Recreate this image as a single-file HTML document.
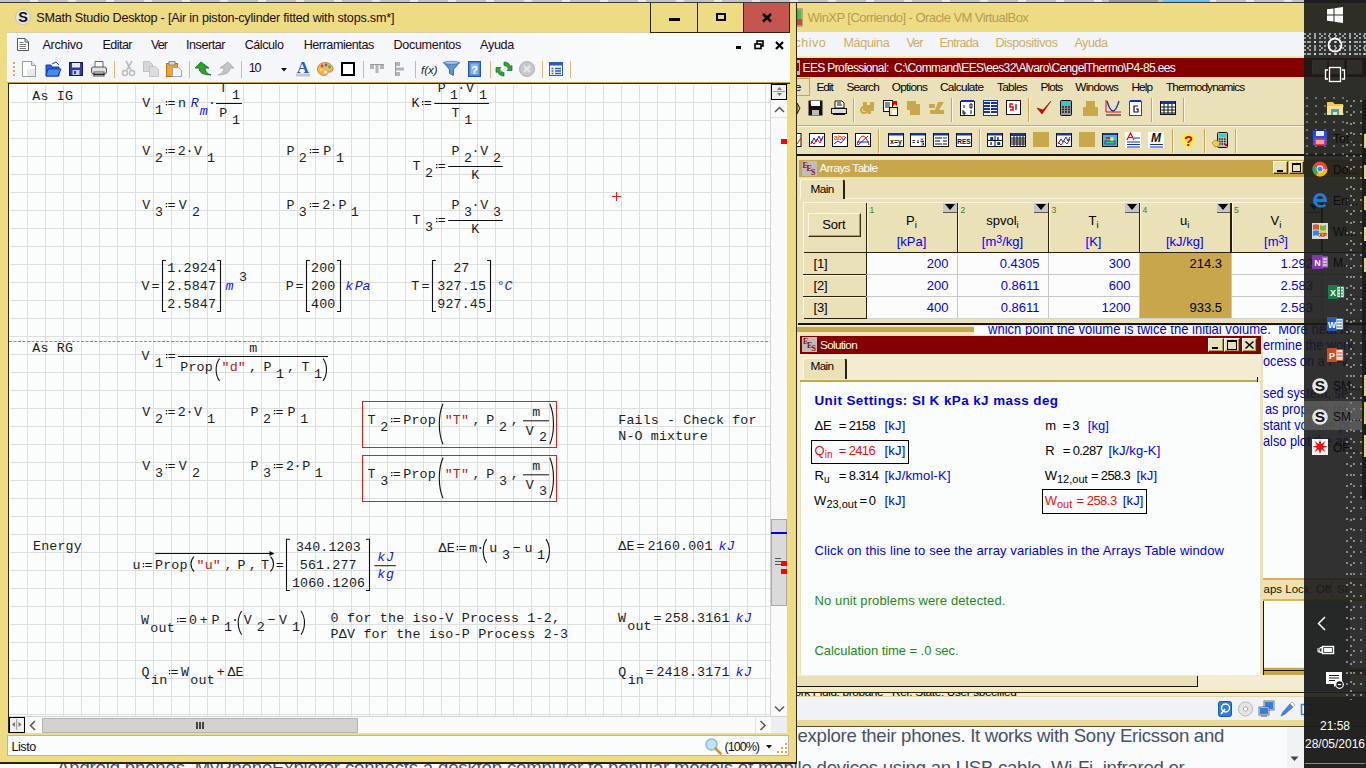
<!DOCTYPE html>
<html lang="es"><head><meta charset="utf-8"><title>SMath Studio Desktop</title>
<style>
html,body{margin:0;padding:0}
body{width:1366px;height:768px;overflow:hidden;position:relative;background:#fff;font-family:"Liberation Sans",sans-serif}
div,span.t{position:absolute;box-sizing:border-box}
span.t{white-space:pre}
svg{overflow:visible}
svg text{white-space:pre}
</style></head>
<body>
<div style="left:0px;top:0px;width:1366px;height:3px;background:#C4C4C4;"></div>
<div style="left:30px;top:0px;width:8px;height:2px;background:#E8E8E8;"></div>
<div style="left:68px;top:0px;width:8px;height:2px;background:#E8E8E8;"></div>
<div style="left:106px;top:0px;width:8px;height:2px;background:#E8E8E8;"></div>
<div style="left:144px;top:0px;width:8px;height:2px;background:#E8E8E8;"></div>
<div style="left:182px;top:0px;width:8px;height:2px;background:#E8E8E8;"></div>
<div style="left:220px;top:0px;width:8px;height:2px;background:#E8E8E8;"></div>
<div style="left:258px;top:0px;width:8px;height:2px;background:#E8E8E8;"></div>
<div style="left:296px;top:0px;width:8px;height:2px;background:#E8E8E8;"></div>
<div style="left:334px;top:0px;width:8px;height:2px;background:#E8E8E8;"></div>
<div style="left:372px;top:0px;width:8px;height:2px;background:#E8E8E8;"></div>
<div style="left:410px;top:0px;width:8px;height:2px;background:#E8E8E8;"></div>
<div style="left:448px;top:0px;width:8px;height:2px;background:#E8E8E8;"></div>
<div style="left:486px;top:0px;width:8px;height:2px;background:#E8E8E8;"></div>
<div style="left:524px;top:0px;width:8px;height:2px;background:#E8E8E8;"></div>
<div style="left:562px;top:0px;width:8px;height:2px;background:#E8E8E8;"></div>
<div style="left:600px;top:0px;width:8px;height:2px;background:#E8E8E8;"></div>
<div style="left:638px;top:0px;width:8px;height:2px;background:#E8E8E8;"></div>
<div style="left:676px;top:0px;width:8px;height:2px;background:#E8E8E8;"></div>
<div style="left:714px;top:0px;width:8px;height:2px;background:#E8E8E8;"></div>
<div style="left:752px;top:0px;width:8px;height:2px;background:#E8E8E8;"></div>
<div style="left:790px;top:0px;width:8px;height:2px;background:#E8E8E8;"></div>
<div style="left:828px;top:0px;width:8px;height:2px;background:#E8E8E8;"></div>
<div style="left:866px;top:0px;width:8px;height:2px;background:#E8E8E8;"></div>
<div style="left:904px;top:0px;width:8px;height:2px;background:#E8E8E8;"></div>
<div style="left:942px;top:0px;width:8px;height:2px;background:#E8E8E8;"></div>
<div style="left:980px;top:0px;width:8px;height:2px;background:#E8E8E8;"></div>
<div style="left:1018px;top:0px;width:8px;height:2px;background:#E8E8E8;"></div>
<div style="left:1056px;top:0px;width:8px;height:2px;background:#E8E8E8;"></div>
<div style="left:1094px;top:0px;width:8px;height:2px;background:#E8E8E8;"></div>
<div style="left:1132px;top:0px;width:8px;height:2px;background:#E8E8E8;"></div>
<div style="left:1170px;top:0px;width:8px;height:2px;background:#E8E8E8;"></div>
<div style="left:1208px;top:0px;width:8px;height:2px;background:#E8E8E8;"></div>
<div style="left:1246px;top:0px;width:8px;height:2px;background:#E8E8E8;"></div>
<div style="left:1284px;top:0px;width:8px;height:2px;background:#E8E8E8;"></div>
<div style="left:1322px;top:0px;width:8px;height:2px;background:#E8E8E8;"></div>
<div style="left:1109px;top:0px;width:49px;height:2px;background:#9A9A9A;"></div>
<div style="left:1163px;top:0px;width:47px;height:2px;background:#6EC2EE;"></div>
<div style="left:0px;top:2px;width:1366px;height:1px;background:#3A3A3A;"></div>
<div style="left:0px;top:727px;width:1366px;height:41px;background:#FAFBFD;"></div>
<span class="t" id="m1" style="top:727px;font:18.6px/18.6px 'Liberation Sans', sans-serif;color:#475166;letter-spacing:-0.279px;left:797.5px;">explore their phones. It works with Sony Ericsson and</span>
<span class="t" id="m2" style="top:759px;font:18.6px/18.6px 'Liberation Sans', sans-serif;color:#475166;letter-spacing:-0.177px;left:57px;">Android phones. MyPhoneExplorer connects a desktop computer to popular models of mobile </span>
<span class="t" id="m3" style="top:759px;font:18.6px/18.6px 'Liberation Sans', sans-serif;color:#475166;letter-spacing:-0.269px;left:816.6px;">devices using an USB cable, Wi-Fi, infrared or</span>
<div style="left:1287px;top:727px;width:17px;height:41px;background:#F1F2F4;"></div>
<svg style="position:absolute;left:1290px;top:756px" width="10" height="6"><path d="M0.5,0.5h8l-4,4.5z" fill="#444"/></svg>
<div style="left:797px;top:3px;width:569px;height:724px;background:#EEDC84;"></div>
<div style="left:797px;top:32px;width:569px;height:24px;background:#F3F4F8;"></div>
<div style="left:797px;top:56px;width:569px;height:2px;background:#F4E9B0;"></div>
<div style="left:797px;top:725px;width:569px;height:2px;background:#8A7A3A;"></div>
<div style="left:797px;top:719px;width:569px;height:7px;background:#E9DA98;"></div>
<div style="left:797px;top:726px;width:569px;height:1px;background:#5A5030;"></div>
<svg style="position:absolute;left:797px;top:9px" width="6" height="18"><rect x="0" y="1" width="4" height="9" fill="#5DB84A"/><rect x="0" y="10" width="5" height="6" fill="#C44A3A"/><rect x="0" y="0" width="5" height="17" fill="none" stroke="#777" stroke-width="1"/></svg>
<span class="t" id="m4" style="top:11px;font:13px/13px 'Liberation Sans', sans-serif;color:#B39C52;letter-spacing:-0.558px;left:807.6px;">WinXP [Corriendo] - Oracle VM VirtualBox</span>
<span class="t" id="m5" style="top:37px;font:12.5px/12.5px 'Liberation Sans', sans-serif;color:#C9AE5E;letter-spacing:0.502px;left:781px;">Archivo</span>
<span class="t" id="m6" style="top:37px;font:12.5px/12.5px 'Liberation Sans', sans-serif;color:#C9AE5E;letter-spacing:-0.265px;left:843.4px;">Máquina</span>
<span class="t" id="m7" style="top:37px;font:12.5px/12.5px 'Liberation Sans', sans-serif;color:#C9AE5E;letter-spacing:-0.922px;left:906.4px;">Ver</span>
<span class="t" id="m8" style="top:37px;font:12.5px/12.5px 'Liberation Sans', sans-serif;color:#C9AE5E;letter-spacing:-0.683px;left:939.4px;">Entrada</span>
<span class="t" id="m9" style="top:37px;font:12.5px/12.5px 'Liberation Sans', sans-serif;color:#C9AE5E;letter-spacing:-0.382px;left:995.4px;">Dispositivos</span>
<span class="t" id="m10" style="top:37px;font:12.5px/12.5px 'Liberation Sans', sans-serif;color:#C9AE5E;letter-spacing:-0.404px;left:1074.4px;">Ayuda</span>
<div style="left:797px;top:58px;width:569px;height:639px;background:#EBE1B8;"></div>
<div style="left:797px;top:58px;width:569px;height:19px;background:#840000;"></div>
<svg style="position:absolute;left:797px;top:60px" width="4" height="15"><rect width="3" height="15" fill="#B9B9B9"/><rect x="0" y="3" width="2" height="8" fill="#7A1010"/></svg>
<span class="t" id="m11" style="top:62px;font:12px/12px 'Liberation Sans', sans-serif;color:#fff;letter-spacing:-0.621px;left:802.5px;">EES Professional:  C:\Command\EES\ees32\Alvaro\CengelThermo\P4-85.ees</span>
<div style="left:1312px;top:60px;width:16px;height:15px;background:#EBE1B8;border:1px solid #fff;border-right-color:#404040;border-bottom-color:#404040;"></div>
<div style="left:1329px;top:60px;width:16px;height:15px;background:#EBE1B8;border:1px solid #fff;border-right-color:#404040;border-bottom-color:#404040;"></div>
<div style="left:1347px;top:60px;width:16px;height:15px;background:#EBE1B8;border:1px solid #fff;border-right-color:#404040;border-bottom-color:#404040;"></div>
<div style="left:797px;top:77px;width:569px;height:21px;background:#EBE1B8;"></div>
<div style="left:797px;top:78px;width:12.5px;height:18px;border:1px solid #C9A24A;border-left:0;"></div>
<span class="t" id="m12" style="top:82px;font:11.8px/11.8px 'Liberation Sans', sans-serif;color:#000;letter-spacing:0.746px;left:780px;">File</span>
<span class="t" id="m13" style="top:82px;font:11.8px/11.8px 'Liberation Sans', sans-serif;color:#000;letter-spacing:-0.982px;left:816.4px;">Edit</span>
<span class="t" id="m14" style="top:82px;font:11.8px/11.8px 'Liberation Sans', sans-serif;color:#000;letter-spacing:-0.798px;left:846.4px;">Search</span>
<span class="t" id="m15" style="top:82px;font:11.8px/11.8px 'Liberation Sans', sans-serif;color:#000;letter-spacing:-0.722px;left:891.7px;">Options</span>
<span class="t" id="m16" style="top:82px;font:11.8px/11.8px 'Liberation Sans', sans-serif;color:#000;letter-spacing:-0.654px;left:940px;">Calculate</span>
<span class="t" id="m17" style="top:82px;font:11.8px/11.8px 'Liberation Sans', sans-serif;color:#000;letter-spacing:-0.685px;left:997px;">Tables</span>
<span class="t" id="m18" style="top:82px;font:11.8px/11.8px 'Liberation Sans', sans-serif;color:#000;letter-spacing:-0.847px;left:1040.4px;">Plots</span>
<span class="t" id="m19" style="top:82px;font:11.8px/11.8px 'Liberation Sans', sans-serif;color:#000;letter-spacing:-0.680px;left:1075.2px;">Windows</span>
<span class="t" id="m20" style="top:82px;font:11.8px/11.8px 'Liberation Sans', sans-serif;color:#000;letter-spacing:-0.941px;left:1131.5px;">Help</span>
<span class="t" id="m21" style="top:82px;font:11.8px/11.8px 'Liberation Sans', sans-serif;color:#000;letter-spacing:-0.870px;left:1166px;">Thermodynamics</span>
<div style="left:797px;top:124.5px;width:507px;height:1px;background:#CDA654;"></div>
<div style="left:797px;top:125.5px;width:507px;height:1px;background:#FBF6DD;"></div>
<div style="left:797px;top:154px;width:569px;height:2px;background:#1A1505;"></div>
<div style="left:797px;top:156px;width:569px;height:3px;background:#F1E8C2;"></div>
<svg style="position:absolute;left:797px;top:100px" width="4" height="16" viewBox="0 0 4 16"><path d="M0,3l3,5l-3,6z" fill="#E6C23A" stroke="#222" stroke-width="1"/></svg>
<svg style="position:absolute;left:808px;top:100px" width="15" height="16" viewBox="0 0 15 16"><rect x="0.5" y="0.5" width="14" height="15" fill="#111"/><rect x="3" y="1" width="9" height="5" fill="#fff"/><rect x="4" y="10" width="7" height="5" fill="#bbb"/><rect x="2" y="1" width="1" height="3" fill="#d00"/></svg>
<svg style="position:absolute;left:831px;top:100px" width="16" height="16" viewBox="0 0 16 16"><path d="M4,1h7l2,2v5h-9z" fill="#fff" stroke="#111"/><rect x="0.5" y="8.5" width="15" height="5" fill="#ddd" stroke="#111"/><rect x="2" y="13" width="12" height="2" fill="#111"/><path d="M6,3h4M6,5h5" stroke="#111"/></svg>
<div style="left:853px;top:98px;width:1px;height:24px;background:#CDA654;"></div>
<div style="left:854px;top:98px;width:1px;height:24px;background:#FBF6DD;"></div>
<svg style="position:absolute;left:860px;top:100px" width="16" height="16" viewBox="0 0 16 16"><path d="M3,2h4v3h3v-3h4v9h-3v3h-3l-2,-3h-3z" fill="#C9A84C"/><circle cx="4" cy="10" r="3" fill="none" stroke="#C9A84C" stroke-width="2"/></svg>
<svg style="position:absolute;left:883px;top:100px" width="16" height="16" viewBox="0 0 16 16"><rect x="0.5" y="0.5" width="9" height="11" fill="#fff" stroke="#111"/><path d="M2,3h5M2,5h5M2,7h5" stroke="#111"/><rect x="6.5" y="7.5" width="8" height="8" fill="#F4E27A" stroke="#111"/><rect x="9" y="10" width="5" height="5" fill="#fff"/><path d="M9,1l5,0l0,5l-2,-2l-2,2z" fill="#e00"/></svg>
<svg style="position:absolute;left:906px;top:100px" width="16" height="16" viewBox="0 0 16 16"><path d="M1,1h9v3h4v11h-10v-5h-3z" fill="#C9A84C"/></svg>
<svg style="position:absolute;left:929px;top:100px" width="16" height="16" viewBox="0 0 16 16"><path d="M0,4h6v4h-6zM9,2h6l-5,8h5v4h-14v-4h5z" fill="#C9A84C"/></svg>
<div style="left:951px;top:98px;width:1px;height:24px;background:#CDA654;"></div>
<div style="left:952px;top:98px;width:1px;height:24px;background:#FBF6DD;"></div>
<svg style="position:absolute;left:960px;top:100px" width="15" height="16" viewBox="0 0 15 16"><rect x="0.5" y="1.5" width="14" height="14" fill="#fff" stroke="#111"/><rect x="1" y="0" width="13" height="2" fill="#1030C0"/><path d="M4,5v3M10,4v4h2v-4zM3,10v4h2v-2h-2M11,10v4" stroke="#111" fill="none"/></svg>
<svg style="position:absolute;left:983px;top:100px" width="15" height="16" viewBox="0 0 15 16"><rect x="0.5" y="0.5" width="14" height="15" fill="#fff" stroke="#1030C0"/><path d="M1,3h13M1,6h13M1,9h13M1,12h13" stroke="#1030C0" stroke-width="2"/><path d="M7.5,1v14" stroke="#fff"/></svg>
<svg style="position:absolute;left:1006px;top:100px" width="15" height="16" viewBox="0 0 15 16"><rect x="0.5" y="0.5" width="14" height="14" fill="#fff" stroke="#111"/><path d="M7,4h-3v3h3v3h-3M10,4v6" stroke="#e00" stroke-width="1.4" fill="none"/></svg>
<div style="left:1028px;top:98px;width:1px;height:24px;background:#CDA654;"></div>
<div style="left:1029px;top:98px;width:1px;height:24px;background:#FBF6DD;"></div>
<svg style="position:absolute;left:1036px;top:100px" width="16" height="16" viewBox="0 0 16 16"><path d="M1,8l5,6l9,-13l-8,9z" fill="#e00000" stroke="#900" stroke-width=".6"/></svg>
<svg style="position:absolute;left:1060px;top:100px" width="12" height="16" viewBox="0 0 12 16"><rect x="0.5" y="0.5" width="11" height="15" rx="1" fill="#999" stroke="#111"/><rect x="2" y="2" width="8" height="3" fill="#3cc"/><path d="M2,7h8M2,9.5h8M2,12h8" stroke="#222" stroke-width="1.4" stroke-dasharray="2 1"/></svg>
<svg style="position:absolute;left:1083px;top:100px" width="16" height="16" viewBox="0 0 16 16"><path d="M3,1h9v6h3v9h-15v-9h3z" fill="#C9A84C"/></svg>
<svg style="position:absolute;left:1105px;top:100px" width="16" height="16" viewBox="0 0 16 16"><path d="M1,0v12h15" stroke="#e00" fill="none"/><path d="M2,1q6,20 12,0" stroke="#1030C0" fill="none" stroke-width="1.3"/><path d="M1,15h15" stroke="#111"/></svg>
<svg style="position:absolute;left:1129px;top:100px" width="13" height="16" viewBox="0 0 13 16"><rect x="0.5" y="1.5" width="12" height="14" fill="#fff" stroke="#e00"/><rect x="1" y="0" width="11" height="2" fill="#1030C0"/><path d="M9,6h-4v6h4v-3h-2" stroke="#111" fill="none" stroke-width="1.2"/></svg>
<div style="left:1151px;top:98px;width:1px;height:24px;background:#CDA654;"></div>
<div style="left:1152px;top:98px;width:1px;height:24px;background:#FBF6DD;"></div>
<svg style="position:absolute;left:1160px;top:100px" width="16" height="16" viewBox="0 0 16 16"><rect x="0.5" y="1.5" width="15" height="13" fill="#fff" stroke="#111"/><rect x="1" y="1" width="14" height="3" fill="#1030C0"/><path d="M1,7h14M1,10h14M1,13h14M4,4v11M8,4v11M12,4v11" stroke="#111"/></svg>
<div style="left:1183px;top:98px;width:1px;height:24px;background:#CDA654;"></div>
<div style="left:1184px;top:98px;width:1px;height:24px;background:#FBF6DD;"></div>
<svg style="position:absolute;left:797px;top:132px" width="5" height="16" viewBox="0 0 5 16"><rect x="-4" y="1.5" width="8" height="13" fill="#fff" stroke="#111"/><path d="M0,12l4,-6" stroke="#e00"/></svg>
<svg style="position:absolute;left:809px;top:132px" width="16" height="16" viewBox="0 0 16 16"><rect x="0.5" y="1.5" width="15" height="13" fill="#fff" stroke="#111"/><path d="M2,12l3,-6l2,4l3,-6l2,5l2,-5" stroke="#1030C0" fill="none"/><path d="M2,9l3,3l3,-5l3,4l3,-6" stroke="#e00" fill="none"/></svg>
<svg style="position:absolute;left:832px;top:132px" width="16" height="16" viewBox="0 0 16 16"><rect x="0.5" y="1.5" width="15" height="13" fill="#fff" stroke="#111"/><path d="M2,12l4,-3l3,2l5,-6" stroke="#1030C0" fill="none"/><text x="2" y="8" font-size="7" font-family="Liberation Sans" fill="#e00">abc</text></svg>
<svg style="position:absolute;left:855px;top:132px" width="16" height="16" viewBox="0 0 16 16"><rect x="0.5" y="1.5" width="15" height="13" fill="#fff" stroke="#111"/><path d="M2,13q6,-18 12,0" stroke="#e00" fill="none"/><path d="M2,10h12M3,13l10,-9" stroke="#1030C0" fill="none"/></svg>
<div style="left:878px;top:129px;width:1px;height:24px;background:#CDA654;"></div>
<div style="left:879px;top:129px;width:1px;height:24px;background:#FBF6DD;"></div>
<svg style="position:absolute;left:888px;top:132px" width="16" height="16" viewBox="0 0 16 16"><rect x="0.5" y="1.5" width="15" height="13" fill="#fff" stroke="#111"/><rect x="1" y="1" width="14" height="2.5" fill="#1030C0"/><text x="8" y="11.500" font-size="7" font-weight="bold" font-family="Liberation Sans" text-anchor="middle" fill="#111">x=y</text></svg>
<svg style="position:absolute;left:910px;top:132px" width="16" height="16" viewBox="0 0 16 16"><rect x="0.5" y="1.5" width="15" height="13" fill="#fff" stroke="#111"/><rect x="1" y="1" width="14" height="2.5" fill="#1030C0"/><path d="M2.500,8.500h2.500M2.500,10.500h2.500M7,9h2M7,10.500h2M10.500,9.500h3.500M11,6.500l2,2M13,6.500l-2,2M11.500,11h2v2h-2" stroke="#111" stroke-width=".9" fill="none"/></svg>
<svg style="position:absolute;left:933px;top:132px" width="16" height="16" viewBox="0 0 16 16"><rect x="0.5" y="1.5" width="15" height="13" fill="#fff" stroke="#111"/><rect x="1" y="1" width="14" height="2.5" fill="#1030C0"/><path d="M2,6h7M2,9h5M2,12h7M10,9h4M10,12h4" stroke="#111"/><path d="M10,6h4" stroke="#1030C0"/></svg>
<svg style="position:absolute;left:956px;top:132px" width="16" height="16" viewBox="0 0 16 16"><rect x="0.5" y="1.5" width="15" height="13" fill="#fff" stroke="#111"/><rect x="1" y="1" width="14" height="2.5" fill="#1030C0"/><text x="8" y="12" font-size="6.500" font-weight="bold" font-family="Liberation Sans" text-anchor="middle" fill="#111">RES</text></svg>
<div style="left:979px;top:129px;width:1px;height:24px;background:#CDA654;"></div>
<div style="left:980px;top:129px;width:1px;height:24px;background:#FBF6DD;"></div>
<svg style="position:absolute;left:987px;top:132px" width="16" height="16" viewBox="0 0 16 16"><rect x="0.5" y="1.5" width="15" height="13" fill="#fff" stroke="#111"/><rect x="1" y="1" width="14" height="2.5" fill="#1030C0"/><path d="M1,8.5h14M8,4v11" stroke="#111"/><path d="M4,5v3M11,5v3M4,10v3M11,10v3M5.5,5v3M12.500,10v3" stroke="#1030C0" stroke-width="1.5"/></svg>
<svg style="position:absolute;left:1010px;top:132px" width="16" height="16" viewBox="0 0 16 16"><rect x="0.5" y="1.5" width="15" height="13" fill="#fff" stroke="#111"/><rect x="1" y="1" width="14" height="3" fill="#1030C0"/><path d="M1,6h14M1,8h14M1,10h14M1,12h14M4,4v11M7,4v11M10,4v11M13,4v11" stroke="#111"/></svg>
<div style="left:1033px;top:132px;width:16px;height:15px;background:#C9A84C;"></div>
<svg style="position:absolute;left:1056px;top:132px" width="16" height="16" viewBox="0 0 16 16"><rect x="0.5" y="1.5" width="15" height="13" fill="#fff" stroke="#111"/><rect x="1" y="1" width="14" height="2.5" fill="#1030C0"/><path d="M2,12l3,-5l2,3l3,-5l2,4l2,-4" stroke="#1030C0" fill="none"/><path d="M2,10l3,3l3,-4l3,3l3,-5" stroke="#e00" fill="none"/></svg>
<div style="left:1079px;top:132px;width:16px;height:15px;background:#C9A84C;"></div>
<svg style="position:absolute;left:1102px;top:132px" width="16" height="16" viewBox="0 0 16 16"><rect x="0.5" y="1.5" width="15" height="13" fill="#fff" stroke="#111"/><rect x="1" y="1" width="14" height="2.5" fill="#1030C0"/><rect x="1" y="4" width="14" height="10" fill="#5ad"/><rect x="3" y="9" width="10" height="3" fill="#2cc" stroke="#111" stroke-width=".6"/><circle cx="10" cy="7" r="2" fill="#ee2"/><path d="M4,6h4" stroke="#e00" stroke-width="1.5"/></svg>
<svg style="position:absolute;left:1125px;top:132px" width="16" height="16" viewBox="0 0 16 16"><rect width="16" height="16" fill="#fff"/><path d="M2,8l3.500,-7l3.500,7M3.500,5.500h4" stroke="#e00" fill="none" stroke-width="1.2"/><path d="M9,6h6M2,10h13M2,12.500h13M2,15h13" stroke="#1030C0"/></svg>
<svg style="position:absolute;left:1148px;top:132px" width="16" height="16" viewBox="0 0 16 16"><rect width="16" height="16" fill="#fff"/><text x="8" y="10" font-size="12" font-weight="bold" font-style="italic" font-family="Liberation Sans" text-anchor="middle" fill="#111">M</text><path d="M2,12.500h13M2,15h13" stroke="#1030C0"/></svg>
<div style="left:1172px;top:129px;width:1px;height:24px;background:#CDA654;"></div>
<div style="left:1173px;top:129px;width:1px;height:24px;background:#FBF6DD;"></div>
<svg style="position:absolute;left:1181px;top:132px" width="15" height="16" viewBox="0 0 15 16"><circle cx="7.500" cy="8" r="7.500" fill="#F4EE52"/><text x="7.500" y="13.500" font-size="15" font-weight="bold" font-family="Liberation Sans" text-anchor="middle" fill="#e00000">?</text></svg>
<div style="left:1204px;top:129px;width:1px;height:24px;background:#CDA654;"></div>
<div style="left:1205px;top:129px;width:1px;height:24px;background:#FBF6DD;"></div>
<svg style="position:absolute;left:1212px;top:132px" width="16" height="16" viewBox="0 0 16 16"><rect x="5.500" y="0.500" width="10" height="15" rx="1" fill="#bbb" stroke="#111"/><rect x="7" y="2" width="7" height="3" fill="#3cc"/><path d="M7,7h7M7,9.500h7M7,12h7" stroke="#222" stroke-width="1.3" stroke-dasharray="1.500 1"/><path d="M0,11l3,-3l5,2l-1,4l-4,1z" fill="#F0D040" stroke="#8a6d10" stroke-width=".6"/><rect x="13" y="12" width="2" height="2" fill="#e00"/></svg>
<div style="left:1235px;top:129px;width:1px;height:24px;background:#CDA654;"></div>
<div style="left:1236px;top:129px;width:1px;height:24px;background:#FBF6DD;"></div>
<div style="left:798px;top:159px;width:568px;height:165px;background:#EBE1B8;"></div>
<div style="left:799px;top:159.5px;width:567px;height:17px;background:#C8A74C;"></div>
<div style="left:801.5px;top:160.5px;width:15px;height:15px;background:#BDBDBD;overflow:hidden;"></div>
<span class="t" style="top:162px;font:8px/8px 'Liberation Serif', serif;color:#8A1010;left:802.5px;font-weight:bold;">E</span>
<span class="t" style="top:165px;font:8px/8px 'Liberation Serif', serif;color:#8A1010;left:806.5px;font-weight:bold;">E</span>
<span class="t" style="top:169px;font:8px/8px 'Liberation Serif', serif;color:#8A1010;left:811.0px;font-weight:bold;">S</span>
<span class="t" id="m22" style="top:163px;font:11.8px/11.8px 'Liberation Sans', sans-serif;color:#fff;letter-spacing:-0.613px;left:819.5px;">Arrays Table</span>
<div style="left:1273px;top:161px;width:15px;height:13px;background:#EBE1B8;border:1px solid #FFFDF0;border-right:1px solid #3A3010;border-bottom:1px solid #3A3010;box-shadow:inset -1px -1px 0 #B89B52;"><div style="left:3px;top:8px;width:6px;height:2px;background:#000"></div></div>
<div style="left:1289px;top:161px;width:15px;height:13px;background:#EBE1B8;border:1px solid #FFFDF0;border-right:1px solid #3A3010;border-bottom:1px solid #3A3010;box-shadow:inset -1px -1px 0 #B89B52;"><div style="left:2px;top:1px;width:9px;height:9px;border:1px solid #000;border-top-width:2px"></div></div>
<div style="left:799px;top:198px;width:567px;height:1px;background:#FBF6DD;"></div>
<div style="left:800px;top:178.5px;width:45px;height:20px;background:#EBE1B8;border-top:1px solid #FBF6DD;border-left:1px solid #FBF6DD;border-right:2px solid #2A2208;border-radius:3px 3px 0 0;"></div>
<span class="t" id="m23" style="top:184px;font:11.8px/11.8px 'Liberation Sans', sans-serif;color:#000;letter-spacing:-0.545px;left:810.4px;">Main</span>
<div style="left:803px;top:202px;width:563px;height:117px;background:#FCFCFC;"></div>
<div style="left:803px;top:202px;width:563px;height:50px;background:#EBE1B8;"></div>
<div style="left:803px;top:202px;width:63px;height:117px;background:#EBE1B8;"></div>
<div style="left:803px;top:251.5px;width:563px;height:1.5px;background:#2A2208;"></div>
<div style="left:803px;top:318px;width:63px;height:1px;background:#2A2208;"></div>
<div style="left:866px;top:318px;width:500px;height:1px;background:#D0D0D0;"></div>
<div style="left:865.5px;top:202px;width:1.5px;height:50px;background:#2A2208;"></div>
<div style="left:867px;top:202px;width:1px;height:50px;background:#FBF6DD;"></div>
<div style="left:866px;top:253px;width:1px;height:65px;background:#C8C8C8;"></div>
<div style="left:956.5px;top:202px;width:1.5px;height:50px;background:#2A2208;"></div>
<div style="left:958px;top:202px;width:1px;height:50px;background:#FBF6DD;"></div>
<div style="left:957px;top:253px;width:1px;height:65px;background:#C8C8C8;"></div>
<div style="left:1047.5px;top:202px;width:1.5px;height:50px;background:#2A2208;"></div>
<div style="left:1049px;top:202px;width:1px;height:50px;background:#FBF6DD;"></div>
<div style="left:1048px;top:253px;width:1px;height:65px;background:#C8C8C8;"></div>
<div style="left:1138.5px;top:202px;width:1.5px;height:50px;background:#2A2208;"></div>
<div style="left:1140px;top:202px;width:1px;height:50px;background:#FBF6DD;"></div>
<div style="left:1139px;top:253px;width:1px;height:65px;background:#C8C8C8;"></div>
<div style="left:1230.0px;top:202px;width:1.5px;height:50px;background:#2A2208;"></div>
<div style="left:1231.5px;top:202px;width:1px;height:50px;background:#FBF6DD;"></div>
<div style="left:1230.5px;top:253px;width:1px;height:65px;background:#C8C8C8;"></div>
<div style="left:1321.0px;top:202px;width:1.5px;height:50px;background:#2A2208;"></div>
<div style="left:1322.5px;top:202px;width:1px;height:50px;background:#FBF6DD;"></div>
<div style="left:1321.5px;top:253px;width:1px;height:65px;background:#C8C8C8;"></div>
<div style="left:865.5px;top:202px;width:1.5px;height:117px;background:#2A2208;"></div>
<div style="left:803px;top:201.5px;width:563px;height:1px;background:#FBF6DD;"></div>
<div style="left:802.5px;top:202px;width:1px;height:117px;background:#FBF6DD;"></div>
<div style="left:866px;top:273.5px;width:500px;height:1px;background:#C8C8C8;"></div>
<div style="left:803px;top:273.5px;width:63px;height:1.5px;background:#2A2208;"></div>
<div style="left:803px;top:275.0px;width:63px;height:1px;background:#FBF6DD;"></div>
<div style="left:866px;top:295.5px;width:500px;height:1px;background:#C8C8C8;"></div>
<div style="left:803px;top:295.5px;width:63px;height:1.5px;background:#2A2208;"></div>
<div style="left:803px;top:297.0px;width:63px;height:1px;background:#FBF6DD;"></div>
<div style="left:808px;top:212.5px;width:53px;height:24px;background:#EBE1B8;border:1px solid #FFFDF0;border-right:1px solid #3A3010;border-bottom:1px solid #3A3010;box-shadow:inset -1px -1px 0 #B89B52;"></div>
<span class="t" id="m24" style="top:218px;font:13px/13px 'Liberation Sans', sans-serif;color:#000;letter-spacing:-0.211px;left:822.3px;">Sort</span>
<span class="t" id="m25" style="top:257px;font:13px/13px 'Liberation Sans', sans-serif;color:#000;letter-spacing:-0.156px;left:813.5px;">[1]</span>
<span class="t" id="m26" style="top:279px;font:13px/13px 'Liberation Sans', sans-serif;color:#000;letter-spacing:-0.156px;left:813.5px;">[2]</span>
<span class="t" id="m27" style="top:301px;font:13px/13px 'Liberation Sans', sans-serif;color:#000;letter-spacing:-0.156px;left:813.5px;">[3]</span>
<span class="t" style="top:206px;font:8.5px/8.5px 'Liberation Sans', sans-serif;color:#1E8A1E;left:869.5px;">1</span>
<div style="left:943px;top:202.5px;width:13.5px;height:10.5px;background:#C6C6C6;border-bottom:1px solid #555;"><div style="left:1.5px;top:1px;width:0;height:0;border-left:5px solid transparent;border-right:5px solid transparent;border-top:6px solid #000"></div></div>
<span class="t" style="top:214px;font:13px/13px 'Liberation Sans', sans-serif;color:#000;left:711.5px;width:400px;text-align:center;">P<span style="font-size:9.5px;position:relative;top:2.5px">i</span></span>
<span class="t" style="top:235px;font:13px/13px 'Liberation Sans', sans-serif;color:#0000E8;left:711.5px;width:400px;text-align:center;">[kPa]</span>
<span class="t" style="top:257px;font:13px/13px 'Liberation Sans', sans-serif;color:#0000E8;right:417.5px;">200</span>
<span class="t" style="top:279px;font:13px/13px 'Liberation Sans', sans-serif;color:#0000E8;right:417.5px;">200</span>
<span class="t" style="top:301px;font:13px/13px 'Liberation Sans', sans-serif;color:#0000E8;right:417.5px;">400</span>
<span class="t" style="top:206px;font:8.5px/8.5px 'Liberation Sans', sans-serif;color:#1E8A1E;left:960.5px;">2</span>
<div style="left:1034px;top:202.5px;width:13.5px;height:10.5px;background:#C6C6C6;border-bottom:1px solid #555;"><div style="left:1.5px;top:1px;width:0;height:0;border-left:5px solid transparent;border-right:5px solid transparent;border-top:6px solid #000"></div></div>
<span class="t" style="top:214px;font:13px/13px 'Liberation Sans', sans-serif;color:#000;left:802.5px;width:400px;text-align:center;">spvol<span style="font-size:9.5px;position:relative;top:2.5px">i</span></span>
<span class="t" style="top:235px;font:13px/13px 'Liberation Sans', sans-serif;color:#0000E8;left:802.5px;width:400px;text-align:center;">[m<span style="font-size:10.5px;position:relative;top:-3px">3</span>/kg]</span>
<span class="t" style="top:257px;font:13px/13px 'Liberation Sans', sans-serif;color:#0000E8;right:326.5px;">0.4305</span>
<span class="t" style="top:279px;font:13px/13px 'Liberation Sans', sans-serif;color:#0000E8;right:326.5px;">0.8611</span>
<span class="t" style="top:301px;font:13px/13px 'Liberation Sans', sans-serif;color:#0000E8;right:326.5px;">0.8611</span>
<span class="t" style="top:206px;font:8.5px/8.5px 'Liberation Sans', sans-serif;color:#1E8A1E;left:1051.5px;">3</span>
<div style="left:1125px;top:202.5px;width:13.5px;height:10.5px;background:#C6C6C6;border-bottom:1px solid #555;"><div style="left:1.5px;top:1px;width:0;height:0;border-left:5px solid transparent;border-right:5px solid transparent;border-top:6px solid #000"></div></div>
<span class="t" style="top:214px;font:13px/13px 'Liberation Sans', sans-serif;color:#000;left:893.5px;width:400px;text-align:center;">T<span style="font-size:9.5px;position:relative;top:2.5px">i</span></span>
<span class="t" style="top:235px;font:13px/13px 'Liberation Sans', sans-serif;color:#0000E8;left:893.5px;width:400px;text-align:center;">[K]</span>
<span class="t" style="top:257px;font:13px/13px 'Liberation Sans', sans-serif;color:#0000E8;right:235.5px;">300</span>
<span class="t" style="top:279px;font:13px/13px 'Liberation Sans', sans-serif;color:#0000E8;right:235.5px;">600</span>
<span class="t" style="top:301px;font:13px/13px 'Liberation Sans', sans-serif;color:#0000E8;right:235.5px;">1200</span>
<span class="t" style="top:206px;font:8.5px/8.5px 'Liberation Sans', sans-serif;color:#1E8A1E;left:1142.5px;">4</span>
<div style="left:1216.5px;top:202.5px;width:13.5px;height:10.5px;background:#C6C6C6;border-bottom:1px solid #555;"><div style="left:1.5px;top:1px;width:0;height:0;border-left:5px solid transparent;border-right:5px solid transparent;border-top:6px solid #000"></div></div>
<span class="t" style="top:214px;font:13px/13px 'Liberation Sans', sans-serif;color:#000;left:984.75px;width:400px;text-align:center;">u<span style="font-size:9.5px;position:relative;top:2.5px">i</span></span>
<span class="t" style="top:235px;font:13px/13px 'Liberation Sans', sans-serif;color:#0000E8;left:984.75px;width:400px;text-align:center;">[kJ/kg]</span>
<div style="left:1140px;top:253px;width:90.5px;height:65.2px;background:#C8A74C;"></div>
<span class="t" style="top:257px;font:13px/13px 'Liberation Sans', sans-serif;color:#000;right:144.0px;">214.3</span>
<span class="t" style="top:279px;font:13px/13px 'Liberation Sans', sans-serif;color:#000;right:144.0px;"></span>
<span class="t" style="top:301px;font:13px/13px 'Liberation Sans', sans-serif;color:#000;right:144.0px;">933.5</span>
<span class="t" style="top:206px;font:8.5px/8.5px 'Liberation Sans', sans-serif;color:#1E8A1E;left:1234.0px;">5</span>
<div style="left:1307.5px;top:202.5px;width:13.5px;height:10.5px;background:#C6C6C6;border-bottom:1px solid #555;"><div style="left:1.5px;top:1px;width:0;height:0;border-left:5px solid transparent;border-right:5px solid transparent;border-top:6px solid #000"></div></div>
<span class="t" style="top:214px;font:13px/13px 'Liberation Sans', sans-serif;color:#000;left:1076.0px;width:400px;text-align:center;">V<span style="font-size:9.5px;position:relative;top:2.5px">i</span></span>
<span class="t" style="top:235px;font:13px/13px 'Liberation Sans', sans-serif;color:#0000E8;left:1076.0px;width:400px;text-align:center;">[m<span style="font-size:10.5px;position:relative;top:-3px">3</span>]</span>
<span class="t" style="top:257px;font:13px/13px 'Liberation Sans', sans-serif;color:#0000E8;right:53.0px;">1.292</span>
<span class="t" style="top:279px;font:13px/13px 'Liberation Sans', sans-serif;color:#0000E8;right:53.0px;">2.583</span>
<span class="t" style="top:301px;font:13px/13px 'Liberation Sans', sans-serif;color:#0000E8;right:53.0px;">2.583</span>
<div style="left:798px;top:322.5px;width:568px;height:2px;background:#1A1505;"></div>
<div style="left:797px;top:324.5px;width:569px;height:11px;background:#F1E8C2;"></div>
<div style="left:797px;top:327px;width:177px;height:4.5px;background:#C8A74C;"></div>
<div style="left:974px;top:325.5px;width:392px;height:10px;background:#FBFCFC;"></div>
<div style="left:1263px;top:335px;width:103px;height:335px;background:#FBFCFC;"></div>
<div style="left:974px;top:326px;width:392px;height:8.500px;overflow:hidden">
<span class="t" style="top:-5px;font:15px/15px 'Liberation Sans', sans-serif;color:#0000E8;left:14px;transform:scaleX(.868);transform-origin:0 0;">which point the volume is twice the initial volume.  More heat is</span>
</div>
<span class="t" style="top:337px;font:15px/15px 'Liberation Sans', sans-serif;color:#0000E8;left:1263px;transform:scaleX(.85);transform-origin:0 0;">ermine the work</span>
<span class="t" style="top:353px;font:15px/15px 'Liberation Sans', sans-serif;color:#0000E8;left:1263px;transform:scaleX(.85);transform-origin:0 0;">ocess on a P-v</span>
<span class="t" style="top:385px;font:15px/15px 'Liberation Sans', sans-serif;color:#0000E8;left:1263px;transform:scaleX(.85);transform-origin:0 0;">sed system, se</span>
<span class="t" style="top:401px;font:15px/15px 'Liberation Sans', sans-serif;color:#0000E8;left:1265px;transform:scaleX(.85);transform-origin:0 0;">as property rel</span>
<span class="t" style="top:417px;font:15px/15px 'Liberation Sans', sans-serif;color:#0000E8;left:1263px;transform:scaleX(.85);transform-origin:0 0;">stant volume pr</span>
<span class="t" style="top:433px;font:15px/15px 'Liberation Sans', sans-serif;color:#0000E8;left:1263px;transform:scaleX(.85);transform-origin:0 0;">also plot the ac</span>
<div style="left:1263px;top:577.5px;width:103px;height:23px;background:#F0E2AE;border-top:2px solid #E0A860;border-bottom:2px solid #D9B560;"></div>
<span class="t" style="top:584px;font:11.5px/11.5px 'Liberation Sans', sans-serif;color:#111;left:1263.5px;">aps Lock: Off</span>
<div style="left:1330.5px;top:580px;width:1px;height:18px;background:#B9A060;"></div>
<span class="t" style="top:584px;font:11.5px/11.5px 'Liberation Sans', sans-serif;color:#111;left:1337px;">SI</span>
<div style="left:1263px;top:667px;width:103px;height:8.5px;background:#C8A74C;"></div>
<div style="left:1263px;top:669.5px;width:103px;height:1.2px;background:#1A1505;"></div>
<div style="left:1263px;top:667px;width:103px;height:1px;background:#F5E9B8;"></div>
<div style="left:797px;top:335px;width:466px;height:351px;background:#EBE1B8;"></div>
<div style="left:797.2px;top:335px;width:2.4px;height:351px;background:#F3ECD0;"></div>
<div style="left:800px;top:335.8px;width:460.5px;height:18px;background:#840000;"></div>
<div style="left:802px;top:337px;width:15px;height:15px;background:#BDBDBD;overflow:hidden;"></div>
<span class="t" style="top:338px;font:8px/8px 'Liberation Serif', serif;color:#8A1010;left:803px;font-weight:bold;">E</span>
<span class="t" style="top:342px;font:8px/8px 'Liberation Serif', serif;color:#8A1010;left:807px;font-weight:bold;">E</span>
<span class="t" style="top:345px;font:8px/8px 'Liberation Serif', serif;color:#8A1010;left:811.5px;font-weight:bold;">S</span>
<span class="t" id="m28" style="top:340px;font:11.8px/11.8px 'Liberation Sans', sans-serif;color:#fff;letter-spacing:-0.705px;left:820px;">Solution</span>
<div style="left:1208px;top:338px;width:15.5px;height:13.5px;background:#EBE1B8;border:1px solid #FFFDF0;border-right:1px solid #3A3010;border-bottom:1px solid #3A3010;box-shadow:inset -1px -1px 0 #B89B52;"><div style="left:3px;top:8px;width:6px;height:2px;background:#000"></div></div>
<div style="left:1224px;top:338px;width:15.5px;height:13.5px;background:#EBE1B8;border:1px solid #FFFDF0;border-right:1px solid #3A3010;border-bottom:1px solid #3A3010;box-shadow:inset -1px -1px 0 #B89B52;"><div style="left:2px;top:1px;width:10px;height:9.5px;border:1px solid #000;border-top-width:2px"></div></div>
<div style="left:1241.5px;top:338px;width:15.5px;height:13.5px;background:#EBE1B8;border:1px solid #FFFDF0;border-right:1px solid #3A3010;border-bottom:1px solid #3A3010;box-shadow:inset -1px -1px 0 #B89B52;"><svg style="position:absolute;left:2.5px;top:2px" width="9" height="8"><path d="M0.5,0.5l8,7M8.5,0.500l-8,7" stroke="#000" stroke-width="1.6"/></svg></div>
<div style="left:800px;top:354px;width:460.5px;height:27px;background:#F3ECD0;"></div>
<div style="left:803px;top:358px;width:43.5px;height:21px;background:#EBE1B8;border-top:1px solid #FBF6DD;border-left:1px solid #FBF6DD;border-right:2px solid #2A2208;border-radius:3px 3px 0 0;"></div>
<span class="t" id="m29" style="top:361px;font:11.8px/11.8px 'Liberation Sans', sans-serif;color:#000;letter-spacing:-0.645px;left:810.5px;">Main</span>
<div style="left:800px;top:379.5px;width:458px;height:2px;background:#C8A74C;"></div>
<div style="left:1256.5px;top:377px;width:1.5px;height:5px;background:#1A1505;"></div>
<div style="left:800.5px;top:382px;width:459.5px;height:293px;background:#FBFCFC;"></div>
<span class="t" id="m30" style="top:394px;font:13.4px/13.4px 'Liberation Sans', sans-serif;color:#0000E8;letter-spacing:0.444px;left:814.5px;font-weight:bold;">Unit Settings: SI K kPa kJ mass deg</span>
<span class="t" id="m31" style="top:419px;font:13px/13px 'Liberation Sans', sans-serif;color:#000;letter-spacing:-0.180px;left:814.6px;">ΔE</span>
<span class="t" id="m32" style="top:419px;font:13px/13px 'Liberation Sans', sans-serif;color:#000;letter-spacing:-0.654px;left:838.8px;">= 2158</span>
<span class="t" id="m33" style="top:419px;font:13px/13px 'Liberation Sans', sans-serif;color:#0000E8;letter-spacing:0.191px;left:884.5px;">[kJ]</span>
<div style="left:811px;top:439.5px;width:98px;height:24.5px;border:1px solid #000;"></div>
<span class="t" style="top:444px;font:13px/13px 'Liberation Sans', sans-serif;color:#F01010;left:814.6px;">Q<span style="font-size:10px;position:relative;top:3px">in</span></span>
<span class="t" id="m34" style="top:444px;font:13px/13px 'Liberation Sans', sans-serif;color:#F01010;letter-spacing:-0.654px;left:838.8px;">= 2416</span>
<span class="t" id="m35" style="top:444px;font:13px/13px 'Liberation Sans', sans-serif;color:#0000E8;letter-spacing:0.191px;left:884.5px;">[kJ]</span>
<span class="t" style="top:469px;font:13px/13px 'Liberation Sans', sans-serif;color:#000;left:814.6px;">R<span style="font-size:10px;position:relative;top:3px">u</span></span>
<span class="t" id="m36" style="top:469px;font:13px/13px 'Liberation Sans', sans-serif;color:#000;letter-spacing:-0.607px;left:838.8px;">= 8.314</span>
<span class="t" id="m37" style="top:469px;font:13px/13px 'Liberation Sans', sans-serif;color:#0000E8;letter-spacing:0.173px;left:884.5px;">[kJ/kmol-K]</span>
<span class="t" style="top:494px;font:13px/13px 'Liberation Sans', sans-serif;color:#000;left:814.1px;">W<span style="font-size:11px;position:relative;top:3px">23,out</span></span>
<span class="t" id="m38" style="top:494px;font:13px/13px 'Liberation Sans', sans-serif;color:#000;letter-spacing:-0.979px;left:859.5px;">= 0</span>
<span class="t" id="m39" style="top:494px;font:13px/13px 'Liberation Sans', sans-serif;color:#0000E8;letter-spacing:0.191px;left:884.5px;">[kJ]</span>
<span class="t" style="top:419px;font:13px/13px 'Liberation Sans', sans-serif;color:#000;left:1045.2px;">m</span>
<span class="t" id="m40" style="top:419px;font:13px/13px 'Liberation Sans', sans-serif;color:#000;letter-spacing:-0.879px;left:1062.7px;">= 3</span>
<span class="t" id="m41" style="top:419px;font:13px/13px 'Liberation Sans', sans-serif;color:#0000E8;letter-spacing:0.083px;left:1087.7px;">[kg]</span>
<span class="t" style="top:444px;font:13px/13px 'Liberation Sans', sans-serif;color:#000;left:1045.2px;">R</span>
<span class="t" id="m42" style="top:444px;font:13px/13px 'Liberation Sans', sans-serif;color:#000;letter-spacing:-0.593px;left:1062.7px;">= 0.287</span>
<span class="t" id="m43" style="top:444px;font:13px/13px 'Liberation Sans', sans-serif;color:#0000E8;letter-spacing:0.136px;left:1108.6px;">[kJ/kg-K]</span>
<span class="t" style="top:469px;font:13px/13px 'Liberation Sans', sans-serif;color:#000;left:1044.7px;">W<span style="font-size:11px;position:relative;top:3px">12,out</span></span>
<span class="t" id="m44" style="top:469px;font:13px/13px 'Liberation Sans', sans-serif;color:#000;letter-spacing:-0.679px;left:1091px;">= 258.3</span>
<span class="t" id="m45" style="top:469px;font:13px/13px 'Liberation Sans', sans-serif;color:#0000E8;letter-spacing:0.066px;left:1136.6px;">[kJ]</span>
<div style="left:1042px;top:489.4px;width:105px;height:24.4px;border:1px solid #000;"></div>
<span class="t" style="top:494px;font:13px/13px 'Liberation Sans', sans-serif;color:#F01010;left:1044.7px;">W<span style="font-size:11px;position:relative;top:3px">out</span></span>
<span class="t" id="m46" style="top:494px;font:13px/13px 'Liberation Sans', sans-serif;color:#F01010;letter-spacing:-0.536px;left:1076.6px;">= 258.3</span>
<span class="t" id="m47" style="top:494px;font:13px/13px 'Liberation Sans', sans-serif;color:#0000E8;letter-spacing:0.191px;left:1122.7px;">[kJ]</span>
<span class="t" id="m48" style="top:544px;font:13px/13px 'Liberation Sans', sans-serif;color:#0000E8;letter-spacing:0.121px;left:814.5px;">Click on this line to see the array variables in the Arrays Table window</span>
<span class="t" id="m49" style="top:594px;font:13px/13px 'Liberation Sans', sans-serif;color:#1A8A1A;letter-spacing:0.124px;left:814.5px;">No unit problems were detected.</span>
<span class="t" id="m50" style="top:644px;font:13px/13px 'Liberation Sans', sans-serif;color:#1A8A1A;letter-spacing:-0.062px;left:814.5px;">Calculation time = .0 sec.</span>
<div style="left:797px;top:675px;width:569px;height:22px;background:#F3ECD0;"></div>
<div style="left:797px;top:675.5px;width:400px;height:10.5px;background:#EBE1B8;"></div>
<div style="left:797px;top:685.5px;width:401px;height:1.3px;background:#1A1505;"></div>
<div style="left:1197px;top:675.5px;width:1.3px;height:11px;background:#1A1505;"></div>
<div style="left:797px;top:688.5px;width:569px;height:3px;background:#F4E9B0;"></div>
<div style="left:797px;top:691.5px;width:569px;height:1.2px;background:#2A2208;"></div>
<div style="left:797px;top:692.500px;width:400px;height:3.200px;overflow:hidden">
<span class="t" id="m51" style="top:-6px;font:11.8px/11.8px 'Liberation Sans', sans-serif;color:#000;letter-spacing:-0.356px;left:-13px;">Work Fluid: propane   Ref. State: User specified</span>
</div>
<div style="left:797px;top:695.7px;width:569px;height:1.5px;background:#E6D9A0;"></div>
<div style="left:797px;top:697px;width:569px;height:22.5px;background:#F1F2F6;"></div>
<svg style="position:absolute;left:1218px;top:701px" width="14" height="16" viewBox="0 0 14 16"><rect x="0.5" y="0.5" width="13" height="15" rx="2" fill="#2F7FE0" stroke="#1A56B0"/><circle cx="7.5" cy="7" r="4" fill="none" stroke="#fff" stroke-width="1.4"/><path d="M7,8l-4,5" stroke="#fff" stroke-width="1.6"/></svg>
<svg style="position:absolute;left:1238px;top:701px" width="15" height="16" viewBox="0 0 15 16"><circle cx="7.500" cy="8" r="7" fill="#E4E4E4" stroke="#B8B8B8"/><circle cx="7.500" cy="8" r="2.200" fill="#fff" stroke="#AAA"/></svg>
<svg style="position:absolute;left:1259px;top:701px" width="16" height="16" viewBox="0 0 16 16"><rect x="5.500" y="0.500" width="9" height="8" fill="#2F7FE0" stroke="#EEE"/><rect x="5" y="0" width="10" height="9" fill="none" stroke="#555" stroke-width=".8"/><rect x="0.500" y="6.500" width="9" height="7" fill="#2F7FE0" stroke="#EEE"/><rect x="0" y="6" width="10" height="8" fill="none" stroke="#555" stroke-width=".8"/><path d="M2,15h6" stroke="#555"/></svg>
<svg style="position:absolute;left:1280px;top:701px" width="16" height="16" viewBox="0 0 16 16"><path d="M1,15l2,-4l7,-8l3,3l-8,7z" fill="#3C8BE8" stroke="#1A56B0" stroke-width=".6"/><path d="M10,3l2,-2l3,3l-2,2z" fill="#fff" stroke="#888" stroke-width=".6"/></svg>
<svg style="position:absolute;left:1301px;top:701px" width="12" height="16" viewBox="0 0 12 16"><rect x="0.500" y="3.500" width="9" height="10" fill="#fff" stroke="#2F7FE0" stroke-width="1.5"/></svg>
<div style="left:1263px;top:601px;width:1.3px;height:74px;background:#1A1505;"></div>
<div style="left:0px;top:3px;width:797px;height:761px;background:#EEDC84;"></div>
<div style="left:796px;top:3px;width:1.2px;height:761px;background:#2A2410;"></div>
<div style="left:0px;top:762px;width:797px;height:1.6px;background:#2A2410;"></div>
<svg style="position:absolute;left:15px;top:10px" width="16" height="15" viewBox="0 0 16 15"><circle cx="8" cy="7" r="7.500" fill="#E4E4E4"/><circle cx="8" cy="7" r="7.500" fill="none" stroke="#BDBDBD" stroke-width=".8"/><text x="8" y="12" font-size="14.500" font-weight="bold" font-family="Liberation Sans" text-anchor="middle" fill="#111">S</text></svg>
<span class="t" id="m52" style="top:12px;font:12.6px/12.6px 'Liberation Sans', sans-serif;color:#1A0A10;letter-spacing:-0.208px;left:36.2px;">SMath Studio Desktop - [Air in piston-cylinder fitted with stops.sm*]</span>
<div style="left:7px;top:32px;width:783px;height:51px;background:linear-gradient(90deg,#F5F6FA 0,#F6F7FA 480px,#FAFBFB 625px);"></div>
<div style="left:7px;top:32px;width:783px;height:1px;background:#D9D2B0;"></div>
<div style="left:7px;top:82px;width:783px;height:1px;background:#C9A53E;"></div>
<div style="left:8px;top:83px;width:782px;height:1.2px;background:#2A2410;"></div>
<div style="left:650px;top:3px;width:140px;height:30px;border:1px solid #2A2410;border-top:0;"></div>
<div style="left:697px;top:3px;width:1px;height:29px;background:#2A2410;"></div>
<div style="left:744px;top:3px;width:45px;height:29px;background:#C4564F;"></div>
<div style="left:743px;top:3px;width:1px;height:29px;background:#2A2410;"></div>
<div style="left:669px;top:17.5px;width:10.5px;height:3.5px;background:#000;"></div>
<div style="left:716px;top:13px;width:10px;height:8px;border:2px solid #000;"></div>
<svg style="position:absolute;left:762px;top:13px" width="10" height="10" viewBox="0 0 10 10"><path d="M1,1l8,7.500M9,1l-8,7.500" stroke="#000" stroke-width="2.600"/></svg>
<svg style="position:absolute;left:17px;top:38px" width="12" height="13" viewBox="0 0 12 13"><path d="M0.500,0.500h7.500l3.500,3.500v8.500h-11z" fill="#fff" stroke="#555"/><path d="M8,0.500v3.500h3.500" fill="none" stroke="#555"/><path d="M2.500,4.500h4M2.500,6.500h6.500M2.500,8.500h6.500M2.500,10.500h6.500" stroke="#777"/></svg>
<span class="t" id="m53" style="top:39px;font:12.6px/12.6px 'Liberation Sans', sans-serif;color:#1A0A18;letter-spacing:-0.286px;left:42.5px;">Archivo</span>
<span class="t" id="m54" style="top:39px;font:12.6px/12.6px 'Liberation Sans', sans-serif;color:#1A0A18;letter-spacing:-0.568px;left:102.5px;">Editar</span>
<span class="t" id="m55" style="top:39px;font:12.6px/12.6px 'Liberation Sans', sans-serif;color:#1A0A18;letter-spacing:-0.969px;left:151px;">Ver</span>
<span class="t" id="m56" style="top:39px;font:12.6px/12.6px 'Liberation Sans', sans-serif;color:#1A0A18;letter-spacing:-0.463px;left:186px;">Insertar</span>
<span class="t" id="m57" style="top:39px;font:12.6px/12.6px 'Liberation Sans', sans-serif;color:#1A0A18;letter-spacing:-0.457px;left:244.7px;">Cálculo</span>
<span class="t" id="m58" style="top:39px;font:12.6px/12.6px 'Liberation Sans', sans-serif;color:#1A0A18;letter-spacing:-0.458px;left:303.7px;">Herramientas</span>
<span class="t" id="m59" style="top:39px;font:12.6px/12.6px 'Liberation Sans', sans-serif;color:#1A0A18;letter-spacing:-0.320px;left:393.5px;">Documentos</span>
<span class="t" id="m60" style="top:39px;font:12.6px/12.6px 'Liberation Sans', sans-serif;color:#1A0A18;letter-spacing:-0.297px;left:480px;">Ayuda</span>
<div style="left:735.5px;top:46px;width:5.5px;height:2.6px;background:#000;"></div>
<svg style="position:absolute;left:753.5px;top:40px" width="10" height="10" viewBox="0 0 10 10"><rect x="3" y="1" width="6" height="5" fill="none" stroke="#000" stroke-width="1.600"/><rect x="1" y="4" width="6" height="4.500" fill="#F5F6F9" stroke="#000" stroke-width="1.600"/></svg>
<svg style="position:absolute;left:774.5px;top:40.5px" width="9" height="9" viewBox="0 0 9 9"><path d="M1,1l7,7M8,1l-7,7" stroke="#000" stroke-width="2.200"/></svg>
<div style="left:13px;top:61.5px;width:2px;height:2px;background:#E0A64A;"></div>
<div style="left:13px;top:65.5px;width:2px;height:2px;background:#E0A64A;"></div>
<div style="left:13px;top:69.5px;width:2px;height:2px;background:#E0A64A;"></div>
<div style="left:13px;top:73.5px;width:2px;height:2px;background:#E0A64A;"></div>
<svg style="position:absolute;left:22px;top:61px" width="14" height="16" viewBox="0 0 14 16"><path d="M0.500,0.500h9l4,4v11h-13z" fill="#fff" stroke="#9A9A9A"/><path d="M9.500,0.500v4h4" fill="#E4E6EE" stroke="#9A9A9A"/><path d="M5,8h8v7h-8z" fill="#DDE0EA" opacity=".7"/></svg>
<svg style="position:absolute;left:45px;top:61px" width="16" height="16" viewBox="0 0 16 16"><path d="M1,4h5l1,2h7v9h-13z" fill="#2A62D8" stroke="#163E9A"/><path d="M3,8h13l-3,7h-12z" fill="#4C86F0" stroke="#163E9A"/><path d="M7,3l4,-2l3,3" fill="none" stroke="#163E9A"/></svg>
<svg style="position:absolute;left:69px;top:61px" width="14" height="16" viewBox="0 0 14 16"><rect x="0.500" y="1.500" width="13" height="13" fill="#2C3FA8" stroke="#101A5A"/><rect x="3" y="2" width="8" height="4.500" fill="#E8ECF8"/><rect x="3.500" y="9" width="7" height="5" fill="#C8CCE0"/><rect x="5" y="10" width="2" height="3" fill="#2C3FA8"/></svg>
<svg style="position:absolute;left:91px;top:61px" width="16" height="16" viewBox="0 0 16 16"><path d="M4,0.500h8v6h-8z" fill="#fff" stroke="#666"/><rect x="0.500" y="6" width="15" height="7" rx="2" fill="#E0E0E0" stroke="#555"/><rect x="3" y="11" width="10" height="4" fill="#fff" stroke="#555"/><rect x="2.500" y="12.500" width="11" height="1.600" fill="#222"/></svg>
<div style="left:114px;top:61px;width:1px;height:17px;background:#E4B86C;"></div>
<svg style="position:absolute;left:121px;top:61px" width="15" height="16" viewBox="0 0 15 16"><path d="M11,0l-5,9M5,0l5,9" stroke="#BDBDBD" stroke-width="1.600"/><circle cx="4" cy="12" r="2.500" fill="none" stroke="#BDBDBD" stroke-width="1.600"/><circle cx="11" cy="12" r="2.500" fill="none" stroke="#BDBDBD" stroke-width="1.600"/></svg>
<svg style="position:absolute;left:143px;top:61px" width="16" height="16" viewBox="0 0 16 16"><path d="M0.500,0.500h6l3,3v7h-9z" fill="#D6D6D6" stroke="#C2C2C2"/><path d="M6.500,5.500h6l3,3v7h-9z" fill="#DCDCDC" stroke="#C2C2C2"/></svg>
<svg style="position:absolute;left:166px;top:61px" width="16" height="16" viewBox="0 0 16 16"><rect x="0.500" y="2.500" width="11" height="13" fill="#F0A428" stroke="#B87414"/><rect x="3" y="0.500" width="6" height="3.500" fill="#D8D8D8" stroke="#8A8A8A"/><path d="M6.500,6.500h6l3,3v6h-9z" fill="#F4F6FC" stroke="#9AA0B8"/></svg>
<div style="left:189px;top:61px;width:1px;height:17px;background:#E4B86C;"></div>
<svg style="position:absolute;left:195px;top:61px" width="16" height="16" viewBox="0 0 16 16"><path d="M6,1l-6,6h4q0,7 12,7q-6,-2 -6,-7h4z" fill="#28A428" stroke="#0E6A0E" stroke-width=".8"/></svg>
<svg style="position:absolute;left:218px;top:61px" width="16" height="16" viewBox="0 0 16 16"><path d="M10,1l6,6h-4q0,7 -12,7q6,-2 6,-7h-4z" fill="#C4C4C4" stroke="#A8A8A8" stroke-width=".8"/></svg>
<div style="left:241px;top:61px;width:1px;height:17px;background:#E4B86C;"></div>
<span class="t" id="m61" style="top:62px;font:12.6px/12.6px 'Liberation Sans', sans-serif;color:#1A0A18;letter-spacing:-1.108px;left:248.7px;">10</span>
<svg style="position:absolute;left:281px;top:68px" width="6" height="4" viewBox="0 0 6 4"><path d="M0,0h6l-3,3.500z" fill="#111"/></svg>
<svg style="position:absolute;left:295.5px;top:61px" width="14" height="16" viewBox="0 0 14 16"><text x="7" y="12" font-size="17" font-weight="bold" font-family="Liberation Serif" text-anchor="middle" fill="#2A5AC0">A</text><rect x="0" y="12.500" width="14" height="3" fill="#C8C8C8"/></svg>
<svg style="position:absolute;left:317px;top:61px" width="16" height="16" viewBox="0 0 16 16"><path d="M8,1.500c5,0 8,3 8,6.500c0,3 -2,3 -4,3c-2,0 -1.500,3.500 -4.500,3.500c-4,0 -7,-2.500 -7,-6.500c0,-4 3.500,-6.500 7.500,-6.500z" fill="#F0B45A" stroke="#B8762A" stroke-width=".8"/><circle cx="5" cy="5" r="1.400" fill="#E83A3A"/><circle cx="9" cy="4" r="1.400" fill="#3A6AE8"/><circle cx="12.500" cy="6" r="1.400" fill="#38B838"/><circle cx="4" cy="9" r="1.400" fill="#E8E03A"/><circle cx="8.500" cy="11" r="1.600" fill="#fff"/></svg>
<div style="left:341px;top:62px;width:14px;height:13.5px;background:#fff;border:2.500px solid #000;"></div>
<div style="left:363px;top:61px;width:1px;height:17px;background:#E4B86C;"></div>
<svg style="position:absolute;left:370px;top:61px" width="14" height="16" viewBox="0 0 14 16"><rect x="0" y="3" width="4" height="5" fill="#B4B4B4"/><rect x="5.500" y="3" width="3" height="9" fill="#B4B4B4"/><rect x="10" y="3" width="4" height="5" fill="#B4B4B4"/><path d="M0,3.500h14" stroke="#9A9A9A"/></svg>
<svg style="position:absolute;left:395px;top:61px" width="9" height="16" viewBox="0 0 9 16"><rect x="0" y="1" width="5" height="4" fill="#B4B4B4"/><rect x="0" y="6.500" width="9" height="3" fill="#B4B4B4"/><rect x="0" y="11" width="5" height="4" fill="#B4B4B4"/><path d="M0.500,1v14" stroke="#9A9A9A"/></svg>
<div style="left:415px;top:61px;width:1px;height:17px;background:#E4B86C;"></div>
<span class="t" id="m62" style="top:65px;font:11.5px/11.5px 'Liberation Sans', sans-serif;color:#222;letter-spacing:-0.027px;left:421px;font-style:italic;">f(x)</span>
<svg style="position:absolute;left:443px;top:61px" width="17" height="16" viewBox="0 0 17 16"><path d="M0.500,1.500h16l-6,7v6l-4,-2v-4z" fill="#5A96D8" stroke="#2A5A9A" stroke-width=".8"/><ellipse cx="8.500" cy="1.800" rx="8" ry="1.500" fill="#A8C8EC" stroke="#2A5A9A" stroke-width=".6"/></svg>
<svg style="position:absolute;left:468px;top:61px" width="13" height="16" viewBox="0 0 13 16"><rect x="0.500" y="0.500" width="12" height="15" fill="#4A86DC" stroke="#2456A8"/><rect x="2.500" y="2.500" width="8" height="11" fill="#8CB4EC"/><text x="6.500" y="12.500" font-size="11" font-weight="bold" font-family="Liberation Sans" text-anchor="middle" fill="#fff">?</text></svg>
<div style="left:490px;top:61px;width:1px;height:17px;background:#E4B86C;"></div>
<svg style="position:absolute;left:496px;top:61px" width="16" height="16" viewBox="0 0 16 16"><path d="M8,1a7,7 0 0 1 6.500,4.500l1.500,-1v5h-5l1.500,-1.500a4.500,4.500 0 0 0 -4.500,-3.500z" fill="#28A838" stroke="#0E6A1A" stroke-width=".7"/><path d="M8,15a7,7 0 0 1 -6.500,-4.500l-1.500,1v-5h5l-1.500,1.500a4.500,4.500 0 0 0 4.500,3.500z" fill="#28A838" stroke="#0E6A1A" stroke-width=".7"/></svg>
<svg style="position:absolute;left:518.5px;top:61px" width="16" height="16" viewBox="0 0 16 16"><circle cx="8" cy="8" r="7.500" fill="#C8C8C8" stroke="#B0B0B0"/><path d="M5,5l6,6M11,5l-6,6" stroke="#E8E8E8" stroke-width="2"/></svg>
<div style="left:542px;top:61px;width:1px;height:17px;background:#E4B86C;"></div>
<svg style="position:absolute;left:548.5px;top:61px" width="14" height="16" viewBox="0 0 14 16"><rect x="0.500" y="1.500" width="13" height="13" fill="#fff" stroke="#2A5AC0"/><rect x="0.500" y="1.500" width="13" height="3" fill="#2A5AC0"/><path d="M2.500,7.500h2M6,7.500h6M2.500,10h2M6,10h6M2.500,12.500h2M6,12.500h6" stroke="#2A5AC0" stroke-width="1.300"/></svg>
<div style="left:570px;top:61px;width:1px;height:17px;background:#E4B86C;"></div>
<div style="left:8px;top:83px;width:1.2px;height:650px;background:#2A2410;"></div>
<div style="left:9px;top:84px;width:761px;height:632px;background:#FBFCFC;"></div>
<div style="left:10px;top:85px;width:760px;height:631px;background-image:linear-gradient(transparent 17px,#DDDEDE 17px),linear-gradient(90deg,transparent 17px,#DDDEDE 17px);background-size:18px 18px;"></div>
<div style="left:770px;top:84px;width:17px;height:632px;background:#FAFAFA;border-left:1px solid #D2D2D2;"></div>
<div style="left:770.5px;top:84px;width:16.5px;height:15.5px;background:#F0F0F0;border:1.500px solid #000;"><svg style="position:absolute;left:0;top:0" width="14" height="13"><path d="M5,5l2.500,-3l2.500,3zM5,8l2.500,3l2.500,-3z" fill="#777"/><path d="M1,6.500h12" stroke="#999"/></svg></div>
<svg style="position:absolute;left:773.5px;top:106px" width="11" height="8" viewBox="0 0 11 8"><path d="M1,6l4.500,-4.500l4.500,4.500" fill="none" stroke="#555" stroke-width="1.500"/></svg>
<div style="left:771px;top:116.5px;width:16px;height:1px;background:#E0E0E0;"></div>
<div style="left:781px;top:139px;width:6px;height:5px;background:#FF0000;"></div>
<div style="left:770.5px;top:518.5px;width:16.5px;height:87px;background:#DADADA;border:1px solid #A8A8A8;"></div>
<div style="left:770.5px;top:532px;width:16.5px;height:2px;background:#0000E0;"></div>
<div style="left:775px;top:558.0px;width:6px;height:1.3px;background:#555;"></div>
<div style="left:775px;top:561.1px;width:6px;height:1.3px;background:#555;"></div>
<div style="left:775px;top:564.2px;width:6px;height:1.3px;background:#555;"></div>
<div style="left:781px;top:561px;width:6px;height:5px;background:#FF0000;"></div>
<div style="left:781px;top:569px;width:6px;height:5px;background:#FF0000;"></div>
<svg style="position:absolute;left:773.5px;top:705px" width="11" height="8" viewBox="0 0 11 8"><path d="M1,1.500l4.500,4.500l4.500,-4.500" fill="none" stroke="#555" stroke-width="1.500"/></svg>
<div style="left:9px;top:716px;width:778px;height:17px;background:#FAFAFA;border-top:1px solid #D2D2D2;"></div>
<div style="left:8.5px;top:717px;width:16.5px;height:16px;background:#F0F0F0;border:1.500px solid #000;"><svg style="position:absolute;left:0;top:0" width="14" height="13"><path d="M5,4l-3,2.500l3,2.500zM8.500,4l3,2.500l-3,2.500z" fill="#777"/><path d="M6.700,1v11" stroke="#999"/></svg></div>
<svg style="position:absolute;left:29px;top:720px" width="8" height="11" viewBox="0 0 8 11"><path d="M6,1l-4.500,4.500l4.500,4.500" fill="none" stroke="#555" stroke-width="1.500"/></svg>
<div style="left:42.3px;top:717.5px;width:316px;height:15.5px;background:#D2D2D2;border:1px solid #B4B4B4;"></div>
<div style="left:196px;top:721.5px;width:1.5px;height:7px;background:#444;"></div>
<div style="left:199px;top:721.5px;width:1.5px;height:7px;background:#444;"></div>
<div style="left:202px;top:721.5px;width:1.5px;height:7px;background:#444;"></div>
<div style="left:754.5px;top:717px;width:1px;height:16px;background:#E0E0E0;"></div>
<svg style="position:absolute;left:759px;top:720px" width="8" height="11" viewBox="0 0 8 11"><path d="M1.500,1l4.500,4.500l-4.500,4.500" fill="none" stroke="#555" stroke-width="1.500"/></svg>
<div style="left:770.5px;top:716.5px;width:16.5px;height:16.5px;background:#EDEEF0;"></div>
<div style="left:7px;top:735px;width:782px;height:21px;background:#FBFCFC;border:1px solid #B4B4B4;"></div>
<span class="t" id="m63" style="top:741px;font:12.6px/12.6px 'Liberation Sans', sans-serif;color:#1A0A18;letter-spacing:-0.482px;left:11.5px;">Listo</span>
<svg style="position:absolute;left:704.5px;top:738px" width="17" height="17" viewBox="0 0 17 17"><circle cx="6.500" cy="6.500" r="5.500" fill="#BFE4F8" stroke="#8CB8D8" stroke-width="1.400"/><path d="M10.500,10.500l5,5" stroke="#D89030" stroke-width="2.600" stroke-linecap="round"/></svg>
<span class="t" id="m64" style="top:741px;font:12.6px/12.6px 'Liberation Sans', sans-serif;color:#1A0A18;letter-spacing:-1.018px;left:724.5px;">(100%)</span>
<svg style="position:absolute;left:766px;top:744.5px" width="6" height="4" viewBox="0 0 6 4"><path d="M0,0h6l-3,3.500z" fill="#111"/></svg>
<div style="left:784.5px;top:742.5px;width:2px;height:2px;background:#D8A848;"></div>
<div style="left:780.5px;top:746.5px;width:2px;height:2px;background:#D8A848;"></div>
<div style="left:784.5px;top:746.5px;width:2px;height:2px;background:#D8A848;"></div>
<div style="left:776.5px;top:750.5px;width:2px;height:2px;background:#D8A848;"></div>
<div style="left:780.5px;top:750.5px;width:2px;height:2px;background:#D8A848;"></div>
<div style="left:784.5px;top:750.5px;width:2px;height:2px;background:#D8A848;"></div>
<span class="t" style="top:90px;font:13.333px/13.333px 'Liberation Mono', monospace;color:#1C1C1C;left:32.37px;letter-spacing:0.139px;">As IG</span>
<span class="t" style="top:342px;font:13.333px/13.333px 'Liberation Mono', monospace;color:#1C1C1C;left:32.37px;letter-spacing:0.139px;">As RG</span>
<span class="t" style="top:540px;font:13.333px/13.333px 'Liberation Mono', monospace;color:#1C1C1C;left:33.07px;letter-spacing:0.139px;">Energy</span>
<span class="t" style="top:414px;font:13.333px/13.333px 'Liberation Mono', monospace;color:#1C1C1C;left:618.27px;letter-spacing:0.139px;">Fails - Check for</span>
<span class="t" style="top:430px;font:13.333px/13.333px 'Liberation Mono', monospace;color:#1C1C1C;left:618.27px;letter-spacing:0.139px;">N-O mixture</span>
<span class="t" style="top:612px;font:13.333px/13.333px 'Liberation Mono', monospace;color:#1C1C1C;left:330.6px;letter-spacing:0.199px;">0 for the iso-V Process 1-2,</span>
<span class="t" style="top:628px;font:13.333px/13.333px 'Liberation Mono', monospace;color:#1C1C1C;left:330.6px;letter-spacing:0.199px;">PΔV for the iso-P Process 2-3</span>
<span class="t" style="top:97px;font:13.333px/13.333px 'Liberation Mono', monospace;color:#1C1C1C;left:142.2px;">V</span>
<span class="t" style="top:104px;font:13.333px/13.333px 'Liberation Mono', monospace;color:#1C1C1C;left:154.9px;">1</span>
<span class="t" style="top:97px;font:13.333px/13.333px 'Liberation Mono', monospace;color:#1C1C1C;left:167.5px;">=</span>
<span class="t" style="top:97px;font:13.333px/13.333px 'Liberation Mono', monospace;color:#1C1C1C;left:178.0px;">n</span>
<span class="t" style="top:97px;font:13.333px/13.333px 'Liberation Mono', monospace;color:#1414F0;left:190.8px;font-style:italic;">R</span>
<span class="t" style="top:105px;font:13.333px/13.333px 'Liberation Mono', monospace;color:#1414F0;left:199.8px;font-style:italic;">m</span>
<span class="t" style="top:97px;font:13.333px/13.333px 'Liberation Mono', monospace;color:#1C1C1C;left:208.0px;">·</span>
<span class="t" style="top:82px;font:13.333px/13.333px 'Liberation Mono', monospace;color:#1C1C1C;left:219.2px;">T</span>
<span class="t" style="top:89px;font:13.333px/13.333px 'Liberation Mono', monospace;color:#1C1C1C;left:232.0px;">1</span>
<span class="t" style="top:107px;font:13.333px/13.333px 'Liberation Mono', monospace;color:#1C1C1C;left:219.2px;">P</span>
<span class="t" style="top:114px;font:13.333px/13.333px 'Liberation Mono', monospace;color:#1C1C1C;left:232.0px;">1</span>
<span class="t" style="top:97px;font:13.333px/13.333px 'Liberation Mono', monospace;color:#1C1C1C;left:411.6px;">K</span>
<span class="t" style="top:97px;font:13.333px/13.333px 'Liberation Mono', monospace;color:#1C1C1C;left:423.7px;">=</span>
<span class="t" style="top:82px;font:13.333px/13.333px 'Liberation Mono', monospace;color:#1C1C1C;left:437.7px;">P</span>
<span class="t" style="top:89px;font:13.333px/13.333px 'Liberation Mono', monospace;color:#1C1C1C;left:450.0px;">1</span>
<span class="t" style="top:82px;font:13.333px/13.333px 'Liberation Mono', monospace;color:#1C1C1C;left:457.3px;">·</span>
<span class="t" style="top:82px;font:13.333px/13.333px 'Liberation Mono', monospace;color:#1C1C1C;left:466.0px;">V</span>
<span class="t" style="top:89px;font:13.333px/13.333px 'Liberation Mono', monospace;color:#1C1C1C;left:479.0px;">1</span>
<span class="t" style="top:107px;font:13.333px/13.333px 'Liberation Mono', monospace;color:#1C1C1C;left:451.4px;">T</span>
<span class="t" style="top:114px;font:13.333px/13.333px 'Liberation Mono', monospace;color:#1C1C1C;left:464.2px;">1</span>
<span class="t" style="top:145px;font:13.333px/13.333px 'Liberation Mono', monospace;color:#1C1C1C;left:142.2px;">V</span>
<span class="t" style="top:152px;font:13.333px/13.333px 'Liberation Mono', monospace;color:#1C1C1C;left:155.0px;">2</span>
<span class="t" style="top:145px;font:13.333px/13.333px 'Liberation Mono', monospace;color:#1C1C1C;left:167.5px;">=</span>
<span class="t" style="top:160px;font:13.333px/13.333px 'Liberation Mono', monospace;color:#1C1C1C;left:412.5px;">T</span>
<span class="t" style="top:167px;font:13.333px/13.333px 'Liberation Mono', monospace;color:#1C1C1C;left:425.0px;">2</span>
<span class="t" style="top:160px;font:13.333px/13.333px 'Liberation Mono', monospace;color:#1C1C1C;left:437.7px;">=</span>
<span class="t" style="top:145px;font:13.333px/13.333px 'Liberation Mono', monospace;color:#1C1C1C;left:451.4px;">P</span>
<span class="t" style="top:152px;font:13.333px/13.333px 'Liberation Mono', monospace;color:#1C1C1C;left:464.0px;">2</span>
<span class="t" style="top:145px;font:13.333px/13.333px 'Liberation Mono', monospace;color:#1C1C1C;left:471.6px;">·</span>
<span class="t" style="top:145px;font:13.333px/13.333px 'Liberation Mono', monospace;color:#1C1C1C;left:480.2px;">V</span>
<span class="t" style="top:152px;font:13.333px/13.333px 'Liberation Mono', monospace;color:#1C1C1C;left:493.0px;">2</span>
<span class="t" style="top:169px;font:13.333px/13.333px 'Liberation Mono', monospace;color:#1C1C1C;left:471.2px;">K</span>
<span class="t" style="top:199px;font:13.333px/13.333px 'Liberation Mono', monospace;color:#1C1C1C;left:142.2px;">V</span>
<span class="t" style="top:206px;font:13.333px/13.333px 'Liberation Mono', monospace;color:#1C1C1C;left:155.0px;">3</span>
<span class="t" style="top:199px;font:13.333px/13.333px 'Liberation Mono', monospace;color:#1C1C1C;left:167.5px;">=</span>
<span class="t" style="top:214px;font:13.333px/13.333px 'Liberation Mono', monospace;color:#1C1C1C;left:412.5px;">T</span>
<span class="t" style="top:221px;font:13.333px/13.333px 'Liberation Mono', monospace;color:#1C1C1C;left:425.0px;">3</span>
<span class="t" style="top:214px;font:13.333px/13.333px 'Liberation Mono', monospace;color:#1C1C1C;left:437.7px;">=</span>
<span class="t" style="top:199px;font:13.333px/13.333px 'Liberation Mono', monospace;color:#1C1C1C;left:451.4px;">P</span>
<span class="t" style="top:206px;font:13.333px/13.333px 'Liberation Mono', monospace;color:#1C1C1C;left:464.0px;">3</span>
<span class="t" style="top:199px;font:13.333px/13.333px 'Liberation Mono', monospace;color:#1C1C1C;left:471.6px;">·</span>
<span class="t" style="top:199px;font:13.333px/13.333px 'Liberation Mono', monospace;color:#1C1C1C;left:480.2px;">V</span>
<span class="t" style="top:206px;font:13.333px/13.333px 'Liberation Mono', monospace;color:#1C1C1C;left:493.0px;">3</span>
<span class="t" style="top:223px;font:13.333px/13.333px 'Liberation Mono', monospace;color:#1C1C1C;left:471.2px;">K</span>
<span class="t" style="top:145px;font:13.333px/13.333px 'Liberation Mono', monospace;color:#1C1C1C;left:177.8px;">2</span>
<span class="t" style="top:145px;font:13.333px/13.333px 'Liberation Mono', monospace;color:#1C1C1C;left:185.4px;">·</span>
<span class="t" style="top:145px;font:13.333px/13.333px 'Liberation Mono', monospace;color:#1C1C1C;left:194.0px;">V</span>
<span class="t" style="top:152px;font:13.333px/13.333px 'Liberation Mono', monospace;color:#1C1C1C;left:206.9px;">1</span>
<span class="t" style="top:145px;font:13.333px/13.333px 'Liberation Mono', monospace;color:#1C1C1C;left:286.4px;">P</span>
<span class="t" style="top:152px;font:13.333px/13.333px 'Liberation Mono', monospace;color:#1C1C1C;left:298.7px;">2</span>
<span class="t" style="top:145px;font:13.333px/13.333px 'Liberation Mono', monospace;color:#1C1C1C;left:311.5px;">=</span>
<span class="t" style="top:145px;font:13.333px/13.333px 'Liberation Mono', monospace;color:#1C1C1C;left:323.3px;">P</span>
<span class="t" style="top:152px;font:13.333px/13.333px 'Liberation Mono', monospace;color:#1C1C1C;left:335.9px;">1</span>
<span class="t" style="top:199px;font:13.333px/13.333px 'Liberation Mono', monospace;color:#1C1C1C;left:178.8px;">V</span>
<span class="t" style="top:206px;font:13.333px/13.333px 'Liberation Mono', monospace;color:#1C1C1C;left:192.1px;">2</span>
<span class="t" style="top:199px;font:13.333px/13.333px 'Liberation Mono', monospace;color:#1C1C1C;left:286.4px;">P</span>
<span class="t" style="top:206px;font:13.333px/13.333px 'Liberation Mono', monospace;color:#1C1C1C;left:298.7px;">3</span>
<span class="t" style="top:199px;font:13.333px/13.333px 'Liberation Mono', monospace;color:#1C1C1C;left:311.5px;">=</span>
<span class="t" style="top:199px;font:13.333px/13.333px 'Liberation Mono', monospace;color:#1C1C1C;left:322.3px;">2</span>
<span class="t" style="top:199px;font:13.333px/13.333px 'Liberation Mono', monospace;color:#1C1C1C;left:329.6px;">·</span>
<span class="t" style="top:199px;font:13.333px/13.333px 'Liberation Mono', monospace;color:#1C1C1C;left:338.5px;">P</span>
<span class="t" style="top:206px;font:13.333px/13.333px 'Liberation Mono', monospace;color:#1C1C1C;left:350.8px;">1</span>
<span class="t" style="top:280px;font:13.333px/13.333px 'Liberation Mono', monospace;color:#1C1C1C;left:141.4px;">V</span>
<span class="t" style="top:280px;font:13.333px/13.333px 'Liberation Mono', monospace;color:#1C1C1C;left:151.4px;">=</span>
<span class="t" style="top:262px;font:13.333px/13.333px 'Liberation Mono', monospace;color:#1C1C1C;left:167.27px;letter-spacing:0.139px;">1.2924</span>
<span class="t" style="top:280px;font:13.333px/13.333px 'Liberation Mono', monospace;color:#1C1C1C;left:167.27px;letter-spacing:0.139px;">2.5847</span>
<span class="t" style="top:298px;font:13.333px/13.333px 'Liberation Mono', monospace;color:#1C1C1C;left:167.27px;letter-spacing:0.139px;">2.5847</span>
<span class="t" style="top:280px;font:13.333px/13.333px 'Liberation Mono', monospace;color:#1414F0;left:225.5px;font-style:italic;">m</span>
<span class="t" style="top:271px;font:13.333px/13.333px 'Liberation Mono', monospace;color:#1C1C1C;left:239.0px;">3</span>
<span class="t" style="top:280px;font:13.333px/13.333px 'Liberation Mono', monospace;color:#1C1C1C;left:285.7px;">P</span>
<span class="t" style="top:280px;font:13.333px/13.333px 'Liberation Mono', monospace;color:#1C1C1C;left:295.4px;">=</span>
<span class="t" style="top:262px;font:13.333px/13.333px 'Liberation Mono', monospace;color:#1C1C1C;left:311.07px;letter-spacing:0.139px;">200</span>
<span class="t" style="top:280px;font:13.333px/13.333px 'Liberation Mono', monospace;color:#1C1C1C;left:311.07px;letter-spacing:0.139px;">200</span>
<span class="t" style="top:298px;font:13.333px/13.333px 'Liberation Mono', monospace;color:#1C1C1C;left:311.07px;letter-spacing:0.139px;">400</span>
<span class="t" style="top:280px;font:13.333px/13.333px 'Liberation Mono', monospace;color:#1414F0;left:345.3px;font-style:italic;">k</span>
<span class="t" style="top:280px;font:13.333px/13.333px 'Liberation Mono', monospace;color:#1414F0;left:354.8px;font-style:italic;">P</span>
<span class="t" style="top:280px;font:13.333px/13.333px 'Liberation Mono', monospace;color:#1414F0;left:362.6px;font-style:italic;">a</span>
<span class="t" style="top:280px;font:13.333px/13.333px 'Liberation Mono', monospace;color:#1C1C1C;left:411.3px;">T</span>
<span class="t" style="top:280px;font:13.333px/13.333px 'Liberation Mono', monospace;color:#1C1C1C;left:421.4px;">=</span>
<span class="t" style="top:262px;font:13.333px/13.333px 'Liberation Mono', monospace;color:#1C1C1C;left:453.23px;letter-spacing:0.139px;">27</span>
<span class="t" style="top:280px;font:13.333px/13.333px 'Liberation Mono', monospace;color:#1C1C1C;left:437.27px;letter-spacing:0.139px;">327.15</span>
<span class="t" style="top:298px;font:13.333px/13.333px 'Liberation Mono', monospace;color:#1C1C1C;left:437.27px;letter-spacing:0.139px;">927.45</span>
<span class="t" style="top:280px;font:13.333px/13.333px 'Liberation Mono', monospace;color:#1414F0;left:496.7px;font-style:italic;">°</span>
<span class="t" style="top:280px;font:13.333px/13.333px 'Liberation Mono', monospace;color:#1414F0;left:504.5px;font-style:italic;">C</span>
<span class="t" style="top:350px;font:13.333px/13.333px 'Liberation Mono', monospace;color:#1C1C1C;left:141.6px;">V</span>
<span class="t" style="top:357px;font:13.333px/13.333px 'Liberation Mono', monospace;color:#1C1C1C;left:154.9px;">1</span>
<span class="t" style="top:350px;font:13.333px/13.333px 'Liberation Mono', monospace;color:#1C1C1C;left:167.7px;">=</span>
<span class="t" style="top:342px;font:13.333px/13.333px 'Liberation Mono', monospace;color:#1C1C1C;left:249.2px;">m</span>
<span class="t" style="top:361px;font:13.333px/13.333px 'Liberation Mono', monospace;color:#1C1C1C;left:180.27px;letter-spacing:0.139px;">Prop</span>
<span class="t" style="top:361px;font:13.333px/13.333px 'Liberation Mono', monospace;color:#B82020;left:221.57px;letter-spacing:0.139px;">&quot;d&quot;</span>
<span class="t" style="top:361px;font:13.333px/13.333px 'Liberation Mono', monospace;color:#1C1C1C;left:249.0px;">,</span>
<span class="t" style="top:361px;font:13.333px/13.333px 'Liberation Mono', monospace;color:#1C1C1C;left:263.5px;">P</span>
<span class="t" style="top:368px;font:13.333px/13.333px 'Liberation Mono', monospace;color:#1C1C1C;left:276.0px;">1</span>
<span class="t" style="top:361px;font:13.333px/13.333px 'Liberation Mono', monospace;color:#1C1C1C;left:287.0px;">,</span>
<span class="t" style="top:361px;font:13.333px/13.333px 'Liberation Mono', monospace;color:#1C1C1C;left:301.4px;">T</span>
<span class="t" style="top:368px;font:13.333px/13.333px 'Liberation Mono', monospace;color:#1C1C1C;left:314.0px;">1</span>
<span class="t" style="top:406px;font:13.333px/13.333px 'Liberation Mono', monospace;color:#1C1C1C;left:142.2px;">V</span>
<span class="t" style="top:413px;font:13.333px/13.333px 'Liberation Mono', monospace;color:#1C1C1C;left:155.0px;">2</span>
<span class="t" style="top:406px;font:13.333px/13.333px 'Liberation Mono', monospace;color:#1C1C1C;left:167.5px;">=</span>
<span class="t" style="top:406px;font:13.333px/13.333px 'Liberation Mono', monospace;color:#1C1C1C;left:250.6px;">P</span>
<span class="t" style="top:413px;font:13.333px/13.333px 'Liberation Mono', monospace;color:#1C1C1C;left:263.0px;">2</span>
<span class="t" style="top:406px;font:13.333px/13.333px 'Liberation Mono', monospace;color:#1C1C1C;left:275.6px;">=</span>
<span class="t" style="top:460px;font:13.333px/13.333px 'Liberation Mono', monospace;color:#1C1C1C;left:142.2px;">V</span>
<span class="t" style="top:467px;font:13.333px/13.333px 'Liberation Mono', monospace;color:#1C1C1C;left:155.0px;">3</span>
<span class="t" style="top:460px;font:13.333px/13.333px 'Liberation Mono', monospace;color:#1C1C1C;left:167.5px;">=</span>
<span class="t" style="top:460px;font:13.333px/13.333px 'Liberation Mono', monospace;color:#1C1C1C;left:250.6px;">P</span>
<span class="t" style="top:467px;font:13.333px/13.333px 'Liberation Mono', monospace;color:#1C1C1C;left:263.0px;">3</span>
<span class="t" style="top:460px;font:13.333px/13.333px 'Liberation Mono', monospace;color:#1C1C1C;left:275.6px;">=</span>
<span class="t" style="top:406px;font:13.333px/13.333px 'Liberation Mono', monospace;color:#1C1C1C;left:177.8px;">2</span>
<span class="t" style="top:406px;font:13.333px/13.333px 'Liberation Mono', monospace;color:#1C1C1C;left:185.4px;">·</span>
<span class="t" style="top:406px;font:13.333px/13.333px 'Liberation Mono', monospace;color:#1C1C1C;left:194.0px;">V</span>
<span class="t" style="top:413px;font:13.333px/13.333px 'Liberation Mono', monospace;color:#1C1C1C;left:206.9px;">1</span>
<span class="t" style="top:406px;font:13.333px/13.333px 'Liberation Mono', monospace;color:#1C1C1C;left:287.5px;">P</span>
<span class="t" style="top:413px;font:13.333px/13.333px 'Liberation Mono', monospace;color:#1C1C1C;left:300.2px;">1</span>
<span class="t" style="top:460px;font:13.333px/13.333px 'Liberation Mono', monospace;color:#1C1C1C;left:178.8px;">V</span>
<span class="t" style="top:467px;font:13.333px/13.333px 'Liberation Mono', monospace;color:#1C1C1C;left:192.1px;">2</span>
<span class="t" style="top:460px;font:13.333px/13.333px 'Liberation Mono', monospace;color:#1C1C1C;left:285.9px;">2</span>
<span class="t" style="top:460px;font:13.333px/13.333px 'Liberation Mono', monospace;color:#1C1C1C;left:293.5px;">·</span>
<span class="t" style="top:460px;font:13.333px/13.333px 'Liberation Mono', monospace;color:#1C1C1C;left:302.3px;">P</span>
<span class="t" style="top:467px;font:13.333px/13.333px 'Liberation Mono', monospace;color:#1C1C1C;left:314.7px;">1</span>
<span class="t" style="top:414px;font:13.333px/13.333px 'Liberation Mono', monospace;color:#1C1C1C;left:367.4px;">T</span>
<span class="t" style="top:421px;font:13.333px/13.333px 'Liberation Mono', monospace;color:#1C1C1C;left:380.3px;">2</span>
<span class="t" style="top:414px;font:13.333px/13.333px 'Liberation Mono', monospace;color:#1C1C1C;left:392.8px;">=</span>
<span class="t" style="top:414px;font:13.333px/13.333px 'Liberation Mono', monospace;color:#1C1C1C;left:403.27px;letter-spacing:0.139px;">Prop</span>
<span class="t" style="top:414px;font:13.333px/13.333px 'Liberation Mono', monospace;color:#B82020;left:444.67px;letter-spacing:0.139px;">&quot;T&quot;</span>
<span class="t" style="top:414px;font:13.333px/13.333px 'Liberation Mono', monospace;color:#1C1C1C;left:472.6px;">,</span>
<span class="t" style="top:414px;font:13.333px/13.333px 'Liberation Mono', monospace;color:#1C1C1C;left:486.2px;">P</span>
<span class="t" style="top:421px;font:13.333px/13.333px 'Liberation Mono', monospace;color:#1C1C1C;left:499.0px;">2</span>
<span class="t" style="top:414px;font:13.333px/13.333px 'Liberation Mono', monospace;color:#1C1C1C;left:510.7px;">,</span>
<span class="t" style="top:406px;font:13.333px/13.333px 'Liberation Mono', monospace;color:#1C1C1C;left:532.2px;">m</span>
<span class="t" style="top:425px;font:13.333px/13.333px 'Liberation Mono', monospace;color:#1C1C1C;left:525.8px;">V</span>
<span class="t" style="top:431px;font:13.333px/13.333px 'Liberation Mono', monospace;color:#1C1C1C;left:539.0px;">2</span>
<span class="t" style="top:468px;font:13.333px/13.333px 'Liberation Mono', monospace;color:#1C1C1C;left:367.4px;">T</span>
<span class="t" style="top:475px;font:13.333px/13.333px 'Liberation Mono', monospace;color:#1C1C1C;left:380.3px;">3</span>
<span class="t" style="top:468px;font:13.333px/13.333px 'Liberation Mono', monospace;color:#1C1C1C;left:392.8px;">=</span>
<span class="t" style="top:468px;font:13.333px/13.333px 'Liberation Mono', monospace;color:#1C1C1C;left:403.27px;letter-spacing:0.139px;">Prop</span>
<span class="t" style="top:468px;font:13.333px/13.333px 'Liberation Mono', monospace;color:#B82020;left:444.67px;letter-spacing:0.139px;">&quot;T&quot;</span>
<span class="t" style="top:468px;font:13.333px/13.333px 'Liberation Mono', monospace;color:#1C1C1C;left:472.6px;">,</span>
<span class="t" style="top:468px;font:13.333px/13.333px 'Liberation Mono', monospace;color:#1C1C1C;left:486.2px;">P</span>
<span class="t" style="top:475px;font:13.333px/13.333px 'Liberation Mono', monospace;color:#1C1C1C;left:499.0px;">3</span>
<span class="t" style="top:468px;font:13.333px/13.333px 'Liberation Mono', monospace;color:#1C1C1C;left:510.7px;">,</span>
<span class="t" style="top:460px;font:13.333px/13.333px 'Liberation Mono', monospace;color:#1C1C1C;left:532.2px;">m</span>
<span class="t" style="top:479px;font:13.333px/13.333px 'Liberation Mono', monospace;color:#1C1C1C;left:525.8px;">V</span>
<span class="t" style="top:485px;font:13.333px/13.333px 'Liberation Mono', monospace;color:#1C1C1C;left:539.0px;">3</span>
<span class="t" style="top:559px;font:13.333px/13.333px 'Liberation Mono', monospace;color:#1C1C1C;left:132.5px;">u</span>
<span class="t" style="top:559px;font:13.333px/13.333px 'Liberation Mono', monospace;color:#1C1C1C;left:144.5px;">=</span>
<span class="t" style="top:559px;font:13.333px/13.333px 'Liberation Mono', monospace;color:#1C1C1C;left:155.07px;letter-spacing:0.139px;">Prop</span>
<span class="t" style="top:559px;font:13.333px/13.333px 'Liberation Mono', monospace;color:#B82020;left:196.57px;letter-spacing:0.139px;">&quot;u&quot;</span>
<span class="t" style="top:559px;font:13.333px/13.333px 'Liberation Mono', monospace;color:#1C1C1C;left:224.5px;">,</span>
<span class="t" style="top:559px;font:13.333px/13.333px 'Liberation Mono', monospace;color:#1C1C1C;left:237.6px;">P</span>
<span class="t" style="top:559px;font:13.333px/13.333px 'Liberation Mono', monospace;color:#1C1C1C;left:248.8px;">,</span>
<span class="t" style="top:559px;font:13.333px/13.333px 'Liberation Mono', monospace;color:#1C1C1C;left:261.1px;">T</span>
<span class="t" style="top:559px;font:13.333px/13.333px 'Liberation Mono', monospace;color:#1C1C1C;left:275.7px;">=</span>
<span class="t" style="top:541px;font:13.333px/13.333px 'Liberation Mono', monospace;color:#1C1C1C;left:295.91px;letter-spacing:0.139px;">340.1203</span>
<span class="t" style="top:559px;font:13.333px/13.333px 'Liberation Mono', monospace;color:#1C1C1C;left:299.78px;letter-spacing:0.139px;">561.277</span>
<span class="t" style="top:577px;font:13.333px/13.333px 'Liberation Mono', monospace;color:#1C1C1C;left:291.94px;letter-spacing:0.139px;">1060.1206</span>
<span class="t" style="top:551px;font:13.333px/13.333px 'Liberation Mono', monospace;color:#1414F0;left:377.2px;font-style:italic;">k</span>
<span class="t" style="top:551px;font:13.333px/13.333px 'Liberation Mono', monospace;color:#1414F0;left:386.0px;font-style:italic;">J</span>
<span class="t" style="top:568px;font:13.333px/13.333px 'Liberation Mono', monospace;color:#1414F0;left:377.2px;font-style:italic;">k</span>
<span class="t" style="top:568px;font:13.333px/13.333px 'Liberation Mono', monospace;color:#1414F0;left:386.0px;font-style:italic;">g</span>
<span class="t" style="top:542px;font:13.333px/13.333px 'Liberation Mono', monospace;color:#1C1C1C;left:438.5px;">Δ</span>
<span class="t" style="top:542px;font:13.333px/13.333px 'Liberation Mono', monospace;color:#1C1C1C;left:446.7px;">E</span>
<span class="t" style="top:542px;font:13.333px/13.333px 'Liberation Mono', monospace;color:#1C1C1C;left:458.5px;">=</span>
<span class="t" style="top:542px;font:13.333px/13.333px 'Liberation Mono', monospace;color:#1C1C1C;left:469.2px;">m</span>
<span class="t" style="top:542px;font:13.333px/13.333px 'Liberation Mono', monospace;color:#1C1C1C;left:476.3px;">·</span>
<span class="t" style="top:542px;font:13.333px/13.333px 'Liberation Mono', monospace;color:#1C1C1C;left:489.2px;">u</span>
<span class="t" style="top:549px;font:13.333px/13.333px 'Liberation Mono', monospace;color:#1C1C1C;left:502.0px;">3</span>
<span class="t" style="top:542px;font:13.333px/13.333px 'Liberation Mono', monospace;color:#1C1C1C;left:512.8px;">−</span>
<span class="t" style="top:542px;font:13.333px/13.333px 'Liberation Mono', monospace;color:#1C1C1C;left:524.4px;">u</span>
<span class="t" style="top:549px;font:13.333px/13.333px 'Liberation Mono', monospace;color:#1C1C1C;left:537.0px;">1</span>
<span class="t" style="top:540px;font:13.333px/13.333px 'Liberation Mono', monospace;color:#1C1C1C;left:618.3px;">Δ</span>
<span class="t" style="top:540px;font:13.333px/13.333px 'Liberation Mono', monospace;color:#1C1C1C;left:626.4px;">E</span>
<span class="t" style="top:540px;font:13.333px/13.333px 'Liberation Mono', monospace;color:#1C1C1C;left:636.5px;">=</span>
<span class="t" style="top:540px;font:13.333px/13.333px 'Liberation Mono', monospace;color:#1C1C1C;left:647.51px;letter-spacing:0.139px;">2160.001</span>
<span class="t" style="top:540px;font:13.333px/13.333px 'Liberation Mono', monospace;color:#1414F0;left:718.5px;font-style:italic;">k</span>
<span class="t" style="top:540px;font:13.333px/13.333px 'Liberation Mono', monospace;color:#1414F0;left:726.7px;font-style:italic;">J</span>
<span class="t" style="top:614px;font:13.333px/13.333px 'Liberation Mono', monospace;color:#1C1C1C;left:141.1px;">W</span>
<span class="t" style="top:622px;font:13.333px/13.333px 'Liberation Mono', monospace;color:#1C1C1C;left:150.37px;letter-spacing:0.139px;">out</span>
<span class="t" style="top:614px;font:13.333px/13.333px 'Liberation Mono', monospace;color:#1C1C1C;left:178.8px;">=</span>
<span class="t" style="top:614px;font:13.333px/13.333px 'Liberation Mono', monospace;color:#1C1C1C;left:189.0px;">0</span>
<span class="t" style="top:614px;font:13.333px/13.333px 'Liberation Mono', monospace;color:#1C1C1C;left:199.8px;">+</span>
<span class="t" style="top:614px;font:13.333px/13.333px 'Liberation Mono', monospace;color:#1C1C1C;left:211.5px;">P</span>
<span class="t" style="top:621px;font:13.333px/13.333px 'Liberation Mono', monospace;color:#1C1C1C;left:224.0px;">1</span>
<span class="t" style="top:614px;font:13.333px/13.333px 'Liberation Mono', monospace;color:#1C1C1C;left:231.0px;">·</span>
<span class="t" style="top:614px;font:13.333px/13.333px 'Liberation Mono', monospace;color:#1C1C1C;left:243.8px;">V</span>
<span class="t" style="top:621px;font:13.333px/13.333px 'Liberation Mono', monospace;color:#1C1C1C;left:256.7px;">2</span>
<span class="t" style="top:614px;font:13.333px/13.333px 'Liberation Mono', monospace;color:#1C1C1C;left:267.6px;">−</span>
<span class="t" style="top:614px;font:13.333px/13.333px 'Liberation Mono', monospace;color:#1C1C1C;left:279.0px;">V</span>
<span class="t" style="top:621px;font:13.333px/13.333px 'Liberation Mono', monospace;color:#1C1C1C;left:292.0px;">1</span>
<span class="t" style="top:612px;font:13.333px/13.333px 'Liberation Mono', monospace;color:#1C1C1C;left:617.9px;">W</span>
<span class="t" style="top:620px;font:13.333px/13.333px 'Liberation Mono', monospace;color:#1C1C1C;left:627.27px;letter-spacing:0.139px;">out</span>
<span class="t" style="top:612px;font:13.333px/13.333px 'Liberation Mono', monospace;color:#1C1C1C;left:653.5px;">=</span>
<span class="t" style="top:612px;font:13.333px/13.333px 'Liberation Mono', monospace;color:#1C1C1C;left:664.51px;letter-spacing:0.139px;">258.3161</span>
<span class="t" style="top:612px;font:13.333px/13.333px 'Liberation Mono', monospace;color:#1414F0;left:735.5px;font-style:italic;">k</span>
<span class="t" style="top:612px;font:13.333px/13.333px 'Liberation Mono', monospace;color:#1414F0;left:743.7px;font-style:italic;">J</span>
<span class="t" style="top:666px;font:13.333px/13.333px 'Liberation Mono', monospace;color:#1C1C1C;left:141.4px;">Q</span>
<span class="t" style="top:674px;font:13.333px/13.333px 'Liberation Mono', monospace;color:#1C1C1C;left:151.07px;letter-spacing:0.139px;">in</span>
<span class="t" style="top:666px;font:13.333px/13.333px 'Liberation Mono', monospace;color:#1C1C1C;left:170.6px;">=</span>
<span class="t" style="top:666px;font:13.333px/13.333px 'Liberation Mono', monospace;color:#1C1C1C;left:181.1px;">W</span>
<span class="t" style="top:674px;font:13.333px/13.333px 'Liberation Mono', monospace;color:#1C1C1C;left:190.37px;letter-spacing:0.139px;">out</span>
<span class="t" style="top:666px;font:13.333px/13.333px 'Liberation Mono', monospace;color:#1C1C1C;left:216.7px;">+</span>
<span class="t" style="top:666px;font:13.333px/13.333px 'Liberation Mono', monospace;color:#1C1C1C;left:227.4px;">Δ</span>
<span class="t" style="top:666px;font:13.333px/13.333px 'Liberation Mono', monospace;color:#1C1C1C;left:235.4px;">E</span>
<span class="t" style="top:666px;font:13.333px/13.333px 'Liberation Mono', monospace;color:#1C1C1C;left:618.3px;">Q</span>
<span class="t" style="top:674px;font:13.333px/13.333px 'Liberation Mono', monospace;color:#1C1C1C;left:627.67px;letter-spacing:0.139px;">in</span>
<span class="t" style="top:666px;font:13.333px/13.333px 'Liberation Mono', monospace;color:#1C1C1C;left:645.5px;">=</span>
<span class="t" style="top:666px;font:13.333px/13.333px 'Liberation Mono', monospace;color:#1C1C1C;left:656.44px;letter-spacing:0.139px;">2418.3171</span>
<span class="t" style="top:666px;font:13.333px/13.333px 'Liberation Mono', monospace;color:#1414F0;left:735.5px;font-style:italic;">k</span>
<span class="t" style="top:666px;font:13.333px/13.333px 'Liberation Mono', monospace;color:#1414F0;left:743.7px;font-style:italic;">J</span>
<svg style="position:absolute;left:0;top:0" width="797" height="768" viewBox="0 0 797 768"><rect x="165.8" y="101" width="1.3" height="1.3" fill="#111"/><rect x="165.8" y="104" width="1.3" height="1.3" fill="#111"/><rect x="216.0" y="103.0" width="26.0" height="1" fill="#111"/><rect x="422.0" y="101" width="1.3" height="1.3" fill="#111"/><rect x="422.0" y="104" width="1.3" height="1.3" fill="#111"/><rect x="434.3" y="103.0" width="54.7" height="1" fill="#111"/><rect x="165.8" y="149" width="1.3" height="1.3" fill="#111"/><rect x="165.8" y="152" width="1.3" height="1.3" fill="#111"/><rect x="436.0" y="164" width="1.3" height="1.3" fill="#111"/><rect x="436.0" y="167" width="1.3" height="1.3" fill="#111"/><rect x="448.2" y="166.0" width="54.6" height="1" fill="#111"/><rect x="165.8" y="203" width="1.3" height="1.3" fill="#111"/><rect x="165.8" y="206" width="1.3" height="1.3" fill="#111"/><rect x="436.0" y="218" width="1.3" height="1.3" fill="#111"/><rect x="436.0" y="221" width="1.3" height="1.3" fill="#111"/><rect x="448.2" y="220.0" width="54.6" height="1" fill="#111"/><rect x="309.8" y="149" width="1.3" height="1.3" fill="#111"/><rect x="309.8" y="152" width="1.3" height="1.3" fill="#111"/><rect x="309.8" y="203" width="1.3" height="1.3" fill="#111"/><rect x="309.8" y="206" width="1.3" height="1.3" fill="#111"/><path d="M166.0,260.5H162.5V311.5H166.0" fill="none" stroke="#111" stroke-width="1.100"/><path d="M217.0,260.5H220.5V311.5H217.0" fill="none" stroke="#111" stroke-width="1.100"/><path d="M310.0,260.5H306.5V311.5H310.0" fill="none" stroke="#111" stroke-width="1.100"/><path d="M337.0,260.5H340.5V311.5H337.0" fill="none" stroke="#111" stroke-width="1.100"/><path d="M436.0,260.5H432.5V311.5H436.0" fill="none" stroke="#111" stroke-width="1.100"/><path d="M487.0,260.5H490.5V311.5H487.0" fill="none" stroke="#111" stroke-width="1.100"/><path d="M9,341.5H770" stroke="#8C8C8C" stroke-width="1" stroke-dasharray="3 1.500" fill="none"/><rect x="166.0" y="354" width="1.3" height="1.3" fill="#111"/><rect x="166.0" y="357" width="1.3" height="1.3" fill="#111"/><rect x="178.0" y="356.0" width="150.0" height="1" fill="#111"/><path d="M219.6,358.5C214.96,364.8 214.96,374.7 219.6,381" fill="none" stroke="#111" stroke-width="1.100"/><path d="M323.0,358.5C327.64,364.8 327.64,374.7 323.0,381" fill="none" stroke="#111" stroke-width="1.100"/><rect x="165.8" y="410" width="1.3" height="1.3" fill="#111"/><rect x="165.8" y="413" width="1.3" height="1.3" fill="#111"/><rect x="273.9" y="410" width="1.3" height="1.3" fill="#111"/><rect x="273.9" y="413" width="1.3" height="1.3" fill="#111"/><rect x="165.8" y="464" width="1.3" height="1.3" fill="#111"/><rect x="165.8" y="467" width="1.3" height="1.3" fill="#111"/><rect x="273.9" y="464" width="1.3" height="1.3" fill="#111"/><rect x="273.9" y="467" width="1.3" height="1.3" fill="#111"/><rect x="362.5" y="401.5" width="194" height="46" fill="none" stroke="#F01818" stroke-width="1"/><rect x="391.1" y="418" width="1.3" height="1.3" fill="#111"/><rect x="391.1" y="421" width="1.3" height="1.3" fill="#111"/><path d="M443.0,403.7C438.07000000000005,415.03999999999996 438.07000000000005,432.86 443.0,444.2" fill="none" stroke="#111" stroke-width="1.100"/><rect x="523.0" y="420.3" width="26.0" height="1" fill="#111"/><path d="M549.8000000000001,403.7C554.73,415.03999999999996 554.73,432.86 549.8000000000001,444.2" fill="none" stroke="#111" stroke-width="1.100"/><rect x="362.5" y="455.5" width="194" height="46" fill="none" stroke="#F01818" stroke-width="1"/><rect x="391.1" y="472" width="1.3" height="1.3" fill="#111"/><rect x="391.1" y="475" width="1.3" height="1.3" fill="#111"/><path d="M443.0,457.7C438.07000000000005,469.03999999999996 438.07000000000005,486.86 443.0,498.2" fill="none" stroke="#111" stroke-width="1.100"/><rect x="523.0" y="474.3" width="26.0" height="1" fill="#111"/><path d="M549.8000000000001,457.7C554.73,469.03999999999996 554.73,486.86 549.8000000000001,498.2" fill="none" stroke="#111" stroke-width="1.100"/><rect x="142.8" y="563" width="1.3" height="1.3" fill="#111"/><rect x="142.8" y="566" width="1.3" height="1.3" fill="#111"/><path d="M155.2,553.5H272" stroke="#111" stroke-width="1"/><path d="M274.500,553.500l-5,-2.600v5.200z" fill="#111"/><path d="M194.0,556.6C189.94,560.772 189.94,567.328 194.0,571.5" fill="none" stroke="#111" stroke-width="1.100"/><path d="M270.5,556.6C274.56,560.772 274.56,567.328 270.5,571.5" fill="none" stroke="#111" stroke-width="1.100"/><path d="M290.0,539.2H286.5V590.5H290.0" fill="none" stroke="#111" stroke-width="1.100"/><path d="M366.0,539.2H369.5V590.5H366.0" fill="none" stroke="#111" stroke-width="1.100"/><rect x="374.3" y="565.2" width="21.5" height="1" fill="#111"/><rect x="456.8" y="546" width="1.3" height="1.3" fill="#111"/><rect x="456.8" y="549" width="1.3" height="1.3" fill="#111"/><path d="M486.7,539.1C482.06,545.7080000000001 482.06,556.092 486.7,562.7" fill="none" stroke="#111" stroke-width="1.100"/><path d="M546.0,539.1C550.6400000000001,545.7080000000001 550.6400000000001,556.092 546.0,562.7" fill="none" stroke="#111" stroke-width="1.100"/><rect x="177.1" y="618" width="1.3" height="1.3" fill="#111"/><rect x="177.1" y="621" width="1.3" height="1.3" fill="#111"/><path d="M241.7,611C237.06,617.636 237.06,628.0640000000001 241.7,634.7" fill="none" stroke="#111" stroke-width="1.100"/><path d="M301.0,611C305.64,617.636 305.64,628.0640000000001 301.0,634.7" fill="none" stroke="#111" stroke-width="1.100"/><rect x="168.9" y="670" width="1.3" height="1.3" fill="#111"/><rect x="168.9" y="673" width="1.3" height="1.3" fill="#111"/><path d="M612,196.500h9M616.500,192v9" stroke="#F01818" stroke-width="1"/></svg>
<div style="left:1304.3px;top:0px;width:61.7px;height:768px;background:rgba(26,27,25,0.900);"></div>
<div style="left:1304.3px;top:0px;width:61.7px;height:3px;background:#1C1C1A;"></div>
<div style="left:1304.3px;top:697px;width:61.7px;height:71px;background:rgba(26,27,25,0.600);"></div>
<div style="left:1362px;top:100px;width:4px;height:400px;background:rgba(10,10,10,0.500);"></div>
<div style="left:1304.3px;top:601px;width:46px;height:90px;background:#262827;"></div>
<div style="left:1304.3px;top:33px;width:61.7px;height:23px;background-image:radial-gradient(circle at 1px 1px,rgba(255,255,255,.85) 0.600px,transparent 0.900px),radial-gradient(circle at 1px 1px,rgba(255,255,255,.85) 0.600px,transparent 0.900px);background-size:5px 4px,7px 6px;background-position:0 0,3px 2px;"></div>
<div style="left:1346px;top:100px;width:16px;height:600px;background-image:radial-gradient(circle at 1px 1px,rgba(255,255,255,.85) 0.600px,transparent 0.900px),radial-gradient(circle at 1px 1px,rgba(255,255,255,.85) 0.600px,transparent 0.900px);background-size:7px 11px,13px 9px;background-position:0 0,4px 5px;opacity:.8;"></div>
<div style="left:1306.3px;top:97px;width:40px;height:60px;background-image:radial-gradient(circle at 1px 1px,rgba(255,255,255,.85) 0.600px,transparent 0.900px);background-size:9px 8px;opacity:.6;"></div>
<svg style="position:absolute;left:1327px;top:7px" width="16" height="16" viewBox="0 0 16 16"><path d="M0,2.300l6.500,-0.900v6.100h-6.500zM7.500,1.200l8.500,-1.200v7.500h-8.500zM0,8.500h6.500v6.100l-6.500,-0.900zM7.500,8.500h8.500v7.500l-8.500,-1.200z" fill="#fff"/></svg>
<svg style="position:absolute;left:1327px;top:37px" width="16" height="16" viewBox="0 0 16 16"><circle cx="8" cy="8" r="6.500" fill="none" stroke="#fff" stroke-width="1.800"/></svg>
<svg style="position:absolute;left:1325px;top:66px" width="20" height="18" viewBox="0 0 20 18"><rect x="4.500" y="1.500" width="11" height="14" fill="none" stroke="#fff" stroke-width="1.300"/><path d="M3,4h-2.500v9h2.500M17,4h2.500v9h-2.500" fill="none" stroke="#fff" stroke-width="1.300"/></svg>
<svg style="position:absolute;left:1327px;top:100px" width="16" height="16" viewBox="0 0 16 16"><path d="M0,2h6l1.500,2h8.500v11h-16z" fill="#F4C84A"/><path d="M0,6h16v9h-16z" fill="#FBE28A"/><rect x="4" y="9" width="8" height="6" fill="#3AA0E8"/><rect x="6" y="12" width="4" height="3" fill="#FBE28A"/></svg>
<svg style="position:absolute;left:1312px;top:130px" width="16" height="16" viewBox="0 0 16 16"><rect x="0.500" y="0.500" width="15" height="15" rx="1" fill="#2A50D8" stroke="#1A2E90"/><rect x="4" y="1" width="8" height="5" fill="#E8ECF8"/><rect x="2.500" y="8.500" width="11" height="7" fill="#E83A4A"/><path d="M4,11h8M4,13h8" stroke="#fff"/></svg>
<span class="t" style="top:133px;font:12px/12px 'Liberation Sans', sans-serif;color:#0C0C0C;left:1333px;">Tot...</span>
<svg style="position:absolute;left:1312px;top:161px" width="16" height="16" viewBox="0 0 16 16"><circle cx="8" cy="8" r="7.500" fill="#E8453C"/><path d="M8,8L1.500,4.200A7.500,7.500 0 0 0 4.300,14.500z" fill="#34A853"/><path d="M8,8L4.300,14.500A7.500,7.500 0 0 0 15.500,8z" fill="#FBBC05"/><circle cx="8" cy="8" r="3.400" fill="#fff"/><circle cx="8" cy="8" r="2.600" fill="#4285F4"/></svg>
<span class="t" style="top:164px;font:12px/12px 'Liberation Sans', sans-serif;color:#0C0C0C;left:1333px;">Do...</span>
<svg style="position:absolute;left:1312px;top:192px" width="16" height="16" viewBox="0 0 16 16"><path d="M1,9a7,7.500 0 0 1 14,-1v2h-10a4,3.500 0 0 0 7.500,1.500l1.500,2.500a8,7 0 0 1 -13,-5zM5,7h6a3,3 0 0 0 -6,0z" fill="#1E7CE0"/></svg>
<span class="t" style="top:195px;font:12px/12px 'Liberation Sans', sans-serif;color:#0C0C0C;left:1333px;">Err...</span>
<svg style="position:absolute;left:1312px;top:223px" width="16" height="16" viewBox="0 0 16 16"><rect width="16" height="16" fill="#D8D8D8"/><path d="M1,2q3,-1.500 6,0v5q-3,-1.500 -6,0z" fill="#E8502A"/><path d="M8,2q3,1.500 6,0v5q-3,1.500 -6,0z" fill="#7AB82A"/><path d="M1,8q3,-1.500 6,0v5q-3,-1.500 -6,0z" fill="#2A8AE0"/><path d="M8,8q3,1.500 6,0v5q-3,1.500 -6,0z" fill="#F4C02A"/><text x="11" y="14" font-size="6" font-weight="bold" font-family="Liberation Sans" text-anchor="middle" fill="#C02020">XP</text></svg>
<span class="t" style="top:226px;font:12px/12px 'Liberation Sans', sans-serif;color:#0C0C0C;left:1333px;">Wi...</span>
<svg style="position:absolute;left:1312px;top:254px" width="16" height="16" viewBox="0 0 16 16"><rect x="0" y="1" width="11" height="14" fill="#8038A8"/><rect x="10" y="2.500" width="6" height="11" fill="#A868C8"/><path d="M11,5h4M11,8h4M11,11h4" stroke="#fff"/><text x="5.500" y="12" font-size="9" font-weight="bold" font-family="Liberation Sans" text-anchor="middle" fill="#fff">N</text></svg>
<span class="t" style="top:257px;font:12px/12px 'Liberation Sans', sans-serif;color:#0C0C0C;left:1333px;">M...</span>
<svg style="position:absolute;left:1328px;top:284px" width="16" height="16" viewBox="0 0 16 16"><rect x="0" y="1" width="10" height="14" fill="#1E7A44"/><rect x="9" y="2.500" width="7" height="11" fill="#fff" stroke="#1E7A44" stroke-width=".8"/><path d="M10,5h5M10,8h5M10,11h5M12.500,3v10" stroke="#1E7A44"/><text x="5" y="12" font-size="9" font-weight="bold" font-family="Liberation Sans" text-anchor="middle" fill="#fff">X</text></svg>
<svg style="position:absolute;left:1327px;top:316px" width="16" height="16" viewBox="0 0 16 16"><rect x="0" y="1" width="10" height="14" fill="#2A5AB8"/><rect x="9" y="2.500" width="7" height="11" fill="#fff" stroke="#2A5AB8" stroke-width=".8"/><path d="M10,5h5M10,8h5M10,11h5" stroke="#2A5AB8"/><text x="5" y="12" font-size="8.500" font-weight="bold" font-family="Liberation Sans" text-anchor="middle" fill="#fff">W</text></svg>
<svg style="position:absolute;left:1327px;top:347px" width="16" height="16" viewBox="0 0 16 16"><rect x="0" y="1" width="10" height="14" fill="#D04A28"/><rect x="9" y="2.500" width="7" height="11" fill="#F4E6E0" stroke="#D04A28" stroke-width=".8"/><path d="M10,6h5M10,9h5" stroke="#D04A28"/><text x="5" y="12" font-size="9" font-weight="bold" font-family="Liberation Sans" text-anchor="middle" fill="#fff">P</text></svg>
<div style="left:1304.3px;top:401px;width:57.7px;height:29px;background:rgba(120,120,118,0.550);"></div>
<svg style="position:absolute;left:1312px;top:378px" width="16" height="16" viewBox="0 0 16 16"><circle cx="8" cy="8" r="7.800" fill="#E6E6E6"/><text x="8" y="13.400" font-size="15.500" font-weight="bold" font-family="Liberation Sans" text-anchor="middle" fill="#111">S</text></svg>
<span class="t" style="top:380px;font:12px/12px 'Liberation Sans', sans-serif;color:#0C0C0C;left:1333px;">SM...</span>
<svg style="position:absolute;left:1312px;top:408.5px" width="16" height="16" viewBox="0 0 16 16"><circle cx="8" cy="8" r="7.800" fill="#E6E6E6"/><text x="8" y="13.400" font-size="15.500" font-weight="bold" font-family="Liberation Sans" text-anchor="middle" fill="#111">S</text></svg>
<span class="t" style="top:411px;font:12px/12px 'Liberation Sans', sans-serif;color:#0C0C0C;left:1333px;">SM...</span>
<svg style="position:absolute;left:1312px;top:439px" width="16" height="16" viewBox="0 0 16 16"><rect width="16" height="16" fill="#F4F4F4"/><path d="M8,1l1.500,4l4,-3l-2.500,4.500l4.500,1l-4.500,1.500l2.500,4l-4,-2.500l-1.500,4.500l-1.500,-4.500l-4,2.500l2.500,-4l-4.500,-1.500l4.500,-1l-2.500,-4.500l4,3z" fill="#F01010"/></svg>
<span class="t" style="top:442px;font:12px/12px 'Liberation Sans', sans-serif;color:#0C0C0C;left:1333px;">OF...</span>
<div style="left:1364px;top:134px;width:2px;height:14px;background:#E8D27A;"></div>
<div style="left:1364px;top:165px;width:2px;height:14px;background:#E8D27A;"></div>
<div style="left:1364px;top:196px;width:2px;height:14px;background:#E8D27A;"></div>
<div style="left:1364px;top:227px;width:2px;height:14px;background:#E8D27A;"></div>
<div style="left:1364px;top:258px;width:2px;height:14px;background:#E8D27A;"></div>
<div style="left:1364px;top:374.5px;width:2px;height:21.5px;background:#E8D27A;"></div>
<div style="left:1364px;top:402px;width:2px;height:21.5px;background:#E8D27A;"></div>
<div style="left:1364px;top:435px;width:2px;height:21.5px;background:#E8D27A;"></div>
<svg style="position:absolute;left:1317px;top:616px" width="10" height="15" viewBox="0 0 10 15"><path d="M8,1l-6.500,6.500l6.500,6.500" fill="none" stroke="#fff" stroke-width="1.500"/></svg>
<svg style="position:absolute;left:1317px;top:644px" width="18" height="12" viewBox="0 0 18 12"><rect x="5.500" y="2.500" width="11" height="7" fill="none" stroke="#fff" stroke-width="1.400"/><rect x="7" y="4" width="8" height="4" fill="#fff"/><path d="M0,5h3v-1.500h2v5h-2v-1.500h-3M2,6v3" stroke="#fff" fill="none"/></svg>
<svg style="position:absolute;left:1326px;top:672px" width="18" height="17" viewBox="0 0 18 17"><path d="M0,0h16v12h-5l-3,3v-3h-8z" fill="#fff"/><path d="M3,3.500h10M3,6h10M3,8.500h6" stroke="#1C1C1A"/><circle cx="13.500" cy="12.500" r="3.800" fill="#1C1C1A" stroke="#fff" stroke-width="1.200"/><path d="M11.800,12.500h3.400" stroke="#fff" stroke-width="1.200"/></svg>
<span class="t" style="top:720px;font:12px/12px 'Liberation Sans', sans-serif;color:#fff;left:1135px;width:400px;text-align:center;">21:58</span>
<span class="t" style="top:738px;font:12px/12px 'Liberation Sans', sans-serif;color:#fff;left:1135px;width:400px;text-align:center;">28/05/2016</span>
<div style="left:1305.3px;top:763px;width:60px;height:1px;background:#8A8A8A;"></div>
</body></html>
